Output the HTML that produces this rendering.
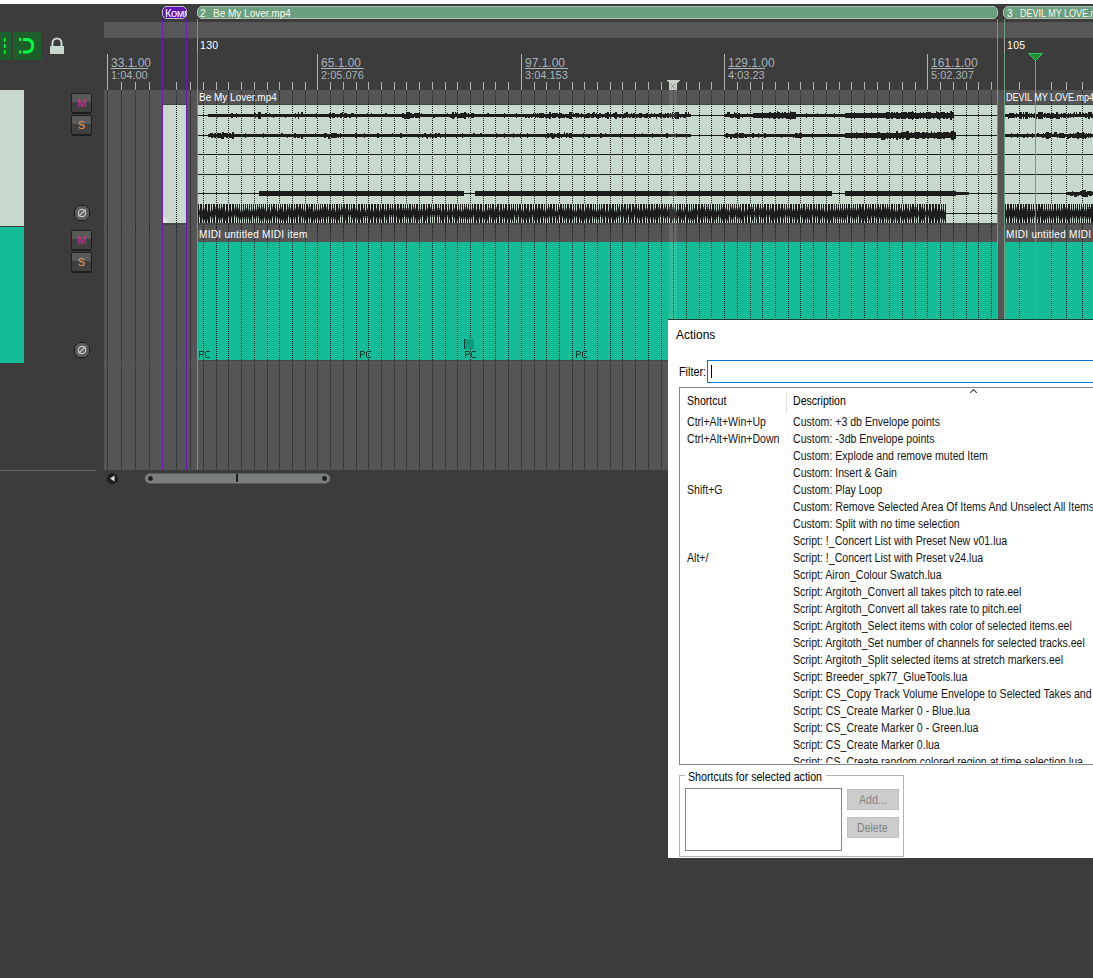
<!DOCTYPE html><html><head><meta charset="utf-8"><style>
*{margin:0;padding:0;box-sizing:border-box}
html,body{width:1093px;height:978px;overflow:hidden;background:#3c3c3c;font-family:"Liberation Sans", sans-serif}
.a{position:absolute}
.t{position:absolute;white-space:nowrap;line-height:1}
</style></head><body>
<div class="a" style="left:0;top:0;width:1093px;height:4px;background:#fff"></div>
<svg class="a" style="left:0;top:0" width="1093" height="978" viewBox="0 0 1093 978" shape-rendering="crispEdges"><rect x="104" y="22" width="989" height="16" fill="#575757"/><rect x="104" y="90" width="989" height="380" fill="#555555"/><rect x="0" y="90" width="24" height="136" fill="#c8d8cc"/><rect x="0" y="227" width="24" height="136" fill="#14bb97"/><rect x="0" y="470" width="96" height="1" fill="#6a6a6a"/><rect x="163" y="104" width="23" height="1" fill="#454545" /><rect x="163" y="105" width="23" height="118" fill="#c8d8cc" /><rect x="163" y="223" width="23" height="2" fill="#474747" /><polygon points="163,216 163,223 170,223" fill="#dde8e0" shape-rendering="auto"/><rect x="198" y="104" width="799" height="1" fill="#454545" /><rect x="198" y="105" width="799" height="118" fill="#c8d8cc" /><rect x="198" y="223" width="799" height="2" fill="#474747" /><rect x="1005" y="104" width="88" height="1" fill="#454545" /><rect x="1005" y="105" width="88" height="118" fill="#c8d8cc" /><rect x="1005" y="223" width="88" height="2" fill="#474747" /><rect x="198" y="242" width="799" height="118" fill="#14bb97" /><rect x="198" y="360" width="799" height="1" fill="#454545" /><rect x="1005" y="242" width="88" height="118" fill="#14bb97" /><rect x="1005" y="360" width="88" height="1" fill="#454545" /><defs><pattern id="dp" x="0" y="0" width="1" height="2" patternUnits="userSpaceOnUse"><rect x="0" y="0" width="1" height="1" fill="#1c1c1c"/></pattern></defs><defs><pattern id="dp2" x="0" y="1" width="1" height="2" patternUnits="userSpaceOnUse"><rect x="0" y="0" width="1" height="1" fill="#1c1c1c"/></pattern></defs><rect x="107" y="90" width="1" height="137" fill="url(#dp)"/><rect x="107" y="227" width="1" height="136" fill="url(#dp2)"/><rect x="107" y="363" width="1" height="107" fill="url(#dp)"/><rect x="121" y="90" width="1" height="137" fill="url(#dp)"/><rect x="121" y="227" width="1" height="136" fill="url(#dp2)"/><rect x="121" y="363" width="1" height="107" fill="url(#dp)"/><rect x="135" y="90" width="1" height="137" fill="url(#dp)"/><rect x="135" y="227" width="1" height="136" fill="url(#dp2)"/><rect x="135" y="363" width="1" height="107" fill="url(#dp)"/><rect x="149" y="90" width="1" height="137" fill="url(#dp)"/><rect x="149" y="227" width="1" height="136" fill="url(#dp2)"/><rect x="149" y="363" width="1" height="107" fill="url(#dp)"/><rect x="176" y="90" width="1" height="137" fill="url(#dp)"/><rect x="176" y="227" width="1" height="136" fill="url(#dp2)"/><rect x="176" y="363" width="1" height="107" fill="url(#dp)"/><rect x="190" y="90" width="1" height="137" fill="url(#dp)"/><rect x="190" y="227" width="1" height="136" fill="url(#dp2)"/><rect x="190" y="363" width="1" height="107" fill="url(#dp)"/><rect x="203" y="90" width="1" height="137" fill="url(#dp)"/><rect x="203" y="227" width="1" height="136" fill="url(#dp2)"/><rect x="203" y="363" width="1" height="107" fill="url(#dp)"/><rect x="216" y="90" width="1" height="137" fill="url(#dp)"/><rect x="216" y="227" width="1" height="136" fill="url(#dp2)"/><rect x="216" y="363" width="1" height="107" fill="url(#dp)"/><rect x="228" y="90" width="1" height="137" fill="url(#dp)"/><rect x="228" y="227" width="1" height="136" fill="url(#dp2)"/><rect x="228" y="363" width="1" height="107" fill="url(#dp)"/><rect x="241" y="90" width="1" height="137" fill="url(#dp)"/><rect x="241" y="227" width="1" height="136" fill="url(#dp2)"/><rect x="241" y="363" width="1" height="107" fill="url(#dp)"/><rect x="254" y="90" width="1" height="137" fill="url(#dp)"/><rect x="254" y="227" width="1" height="136" fill="url(#dp2)"/><rect x="254" y="363" width="1" height="107" fill="url(#dp)"/><rect x="267" y="90" width="1" height="137" fill="url(#dp)"/><rect x="267" y="227" width="1" height="136" fill="url(#dp2)"/><rect x="267" y="363" width="1" height="107" fill="url(#dp)"/><rect x="279" y="90" width="1" height="137" fill="url(#dp)"/><rect x="279" y="227" width="1" height="136" fill="url(#dp2)"/><rect x="279" y="363" width="1" height="107" fill="url(#dp)"/><rect x="292" y="90" width="1" height="137" fill="url(#dp)"/><rect x="292" y="227" width="1" height="136" fill="url(#dp2)"/><rect x="292" y="363" width="1" height="107" fill="url(#dp)"/><rect x="305" y="90" width="1" height="137" fill="url(#dp)"/><rect x="305" y="227" width="1" height="136" fill="url(#dp2)"/><rect x="305" y="363" width="1" height="107" fill="url(#dp)"/><rect x="317" y="90" width="1" height="137" fill="url(#dp)"/><rect x="317" y="227" width="1" height="136" fill="url(#dp2)"/><rect x="317" y="363" width="1" height="107" fill="url(#dp)"/><rect x="330" y="90" width="1" height="137" fill="url(#dp)"/><rect x="330" y="227" width="1" height="136" fill="url(#dp2)"/><rect x="330" y="363" width="1" height="107" fill="url(#dp)"/><rect x="343" y="90" width="1" height="137" fill="url(#dp)"/><rect x="343" y="227" width="1" height="136" fill="url(#dp2)"/><rect x="343" y="363" width="1" height="107" fill="url(#dp)"/><rect x="356" y="90" width="1" height="137" fill="url(#dp)"/><rect x="356" y="227" width="1" height="136" fill="url(#dp2)"/><rect x="356" y="363" width="1" height="107" fill="url(#dp)"/><rect x="368" y="90" width="1" height="137" fill="url(#dp)"/><rect x="368" y="227" width="1" height="136" fill="url(#dp2)"/><rect x="368" y="363" width="1" height="107" fill="url(#dp)"/><rect x="381" y="90" width="1" height="137" fill="url(#dp)"/><rect x="381" y="227" width="1" height="136" fill="url(#dp2)"/><rect x="381" y="363" width="1" height="107" fill="url(#dp)"/><rect x="394" y="90" width="1" height="137" fill="url(#dp)"/><rect x="394" y="227" width="1" height="136" fill="url(#dp2)"/><rect x="394" y="363" width="1" height="107" fill="url(#dp)"/><rect x="406" y="90" width="1" height="137" fill="url(#dp)"/><rect x="406" y="227" width="1" height="136" fill="url(#dp2)"/><rect x="406" y="363" width="1" height="107" fill="url(#dp)"/><rect x="419" y="90" width="1" height="137" fill="url(#dp)"/><rect x="419" y="227" width="1" height="136" fill="url(#dp2)"/><rect x="419" y="363" width="1" height="107" fill="url(#dp)"/><rect x="432" y="90" width="1" height="137" fill="url(#dp)"/><rect x="432" y="227" width="1" height="136" fill="url(#dp2)"/><rect x="432" y="363" width="1" height="107" fill="url(#dp)"/><rect x="445" y="90" width="1" height="137" fill="url(#dp)"/><rect x="445" y="227" width="1" height="136" fill="url(#dp2)"/><rect x="445" y="363" width="1" height="107" fill="url(#dp)"/><rect x="457" y="90" width="1" height="137" fill="url(#dp)"/><rect x="457" y="227" width="1" height="136" fill="url(#dp2)"/><rect x="457" y="363" width="1" height="107" fill="url(#dp)"/><rect x="470" y="90" width="1" height="137" fill="url(#dp)"/><rect x="470" y="227" width="1" height="136" fill="url(#dp2)"/><rect x="470" y="363" width="1" height="107" fill="url(#dp)"/><rect x="483" y="90" width="1" height="137" fill="url(#dp)"/><rect x="483" y="227" width="1" height="136" fill="url(#dp2)"/><rect x="483" y="363" width="1" height="107" fill="url(#dp)"/><rect x="495" y="90" width="1" height="137" fill="url(#dp)"/><rect x="495" y="227" width="1" height="136" fill="url(#dp2)"/><rect x="495" y="363" width="1" height="107" fill="url(#dp)"/><rect x="508" y="90" width="1" height="137" fill="url(#dp)"/><rect x="508" y="227" width="1" height="136" fill="url(#dp2)"/><rect x="508" y="363" width="1" height="107" fill="url(#dp)"/><rect x="521" y="90" width="1" height="137" fill="url(#dp)"/><rect x="521" y="227" width="1" height="136" fill="url(#dp2)"/><rect x="521" y="363" width="1" height="107" fill="url(#dp)"/><rect x="534" y="90" width="1" height="137" fill="url(#dp)"/><rect x="534" y="227" width="1" height="136" fill="url(#dp2)"/><rect x="534" y="363" width="1" height="107" fill="url(#dp)"/><rect x="546" y="90" width="1" height="137" fill="url(#dp)"/><rect x="546" y="227" width="1" height="136" fill="url(#dp2)"/><rect x="546" y="363" width="1" height="107" fill="url(#dp)"/><rect x="559" y="90" width="1" height="137" fill="url(#dp)"/><rect x="559" y="227" width="1" height="136" fill="url(#dp2)"/><rect x="559" y="363" width="1" height="107" fill="url(#dp)"/><rect x="572" y="90" width="1" height="137" fill="url(#dp)"/><rect x="572" y="227" width="1" height="136" fill="url(#dp2)"/><rect x="572" y="363" width="1" height="107" fill="url(#dp)"/><rect x="584" y="90" width="1" height="137" fill="url(#dp)"/><rect x="584" y="227" width="1" height="136" fill="url(#dp2)"/><rect x="584" y="363" width="1" height="107" fill="url(#dp)"/><rect x="597" y="90" width="1" height="137" fill="url(#dp)"/><rect x="597" y="227" width="1" height="136" fill="url(#dp2)"/><rect x="597" y="363" width="1" height="107" fill="url(#dp)"/><rect x="610" y="90" width="1" height="137" fill="url(#dp)"/><rect x="610" y="227" width="1" height="136" fill="url(#dp2)"/><rect x="610" y="363" width="1" height="107" fill="url(#dp)"/><rect x="622" y="90" width="1" height="137" fill="url(#dp)"/><rect x="622" y="227" width="1" height="136" fill="url(#dp2)"/><rect x="622" y="363" width="1" height="107" fill="url(#dp)"/><rect x="635" y="90" width="1" height="137" fill="url(#dp)"/><rect x="635" y="227" width="1" height="136" fill="url(#dp2)"/><rect x="635" y="363" width="1" height="107" fill="url(#dp)"/><rect x="648" y="90" width="1" height="137" fill="url(#dp)"/><rect x="648" y="227" width="1" height="136" fill="url(#dp2)"/><rect x="648" y="363" width="1" height="107" fill="url(#dp)"/><rect x="661" y="90" width="1" height="137" fill="url(#dp)"/><rect x="661" y="227" width="1" height="136" fill="url(#dp2)"/><rect x="661" y="363" width="1" height="107" fill="url(#dp)"/><rect x="673" y="90" width="1" height="137" fill="url(#dp)"/><rect x="673" y="227" width="1" height="136" fill="url(#dp2)"/><rect x="673" y="363" width="1" height="107" fill="url(#dp)"/><rect x="686" y="90" width="1" height="137" fill="url(#dp)"/><rect x="686" y="227" width="1" height="136" fill="url(#dp2)"/><rect x="686" y="363" width="1" height="107" fill="url(#dp)"/><rect x="699" y="90" width="1" height="137" fill="url(#dp)"/><rect x="699" y="227" width="1" height="136" fill="url(#dp2)"/><rect x="699" y="363" width="1" height="107" fill="url(#dp)"/><rect x="711" y="90" width="1" height="137" fill="url(#dp)"/><rect x="711" y="227" width="1" height="136" fill="url(#dp2)"/><rect x="711" y="363" width="1" height="107" fill="url(#dp)"/><rect x="724" y="90" width="1" height="137" fill="url(#dp)"/><rect x="724" y="227" width="1" height="136" fill="url(#dp2)"/><rect x="724" y="363" width="1" height="107" fill="url(#dp)"/><rect x="737" y="90" width="1" height="137" fill="url(#dp)"/><rect x="737" y="227" width="1" height="136" fill="url(#dp2)"/><rect x="737" y="363" width="1" height="107" fill="url(#dp)"/><rect x="750" y="90" width="1" height="137" fill="url(#dp)"/><rect x="750" y="227" width="1" height="136" fill="url(#dp2)"/><rect x="750" y="363" width="1" height="107" fill="url(#dp)"/><rect x="762" y="90" width="1" height="137" fill="url(#dp)"/><rect x="762" y="227" width="1" height="136" fill="url(#dp2)"/><rect x="762" y="363" width="1" height="107" fill="url(#dp)"/><rect x="775" y="90" width="1" height="137" fill="url(#dp)"/><rect x="775" y="227" width="1" height="136" fill="url(#dp2)"/><rect x="775" y="363" width="1" height="107" fill="url(#dp)"/><rect x="788" y="90" width="1" height="137" fill="url(#dp)"/><rect x="788" y="227" width="1" height="136" fill="url(#dp2)"/><rect x="788" y="363" width="1" height="107" fill="url(#dp)"/><rect x="800" y="90" width="1" height="137" fill="url(#dp)"/><rect x="800" y="227" width="1" height="136" fill="url(#dp2)"/><rect x="800" y="363" width="1" height="107" fill="url(#dp)"/><rect x="813" y="90" width="1" height="137" fill="url(#dp)"/><rect x="813" y="227" width="1" height="136" fill="url(#dp2)"/><rect x="813" y="363" width="1" height="107" fill="url(#dp)"/><rect x="826" y="90" width="1" height="137" fill="url(#dp)"/><rect x="826" y="227" width="1" height="136" fill="url(#dp2)"/><rect x="826" y="363" width="1" height="107" fill="url(#dp)"/><rect x="839" y="90" width="1" height="137" fill="url(#dp)"/><rect x="839" y="227" width="1" height="136" fill="url(#dp2)"/><rect x="839" y="363" width="1" height="107" fill="url(#dp)"/><rect x="851" y="90" width="1" height="137" fill="url(#dp)"/><rect x="851" y="227" width="1" height="136" fill="url(#dp2)"/><rect x="851" y="363" width="1" height="107" fill="url(#dp)"/><rect x="864" y="90" width="1" height="137" fill="url(#dp)"/><rect x="864" y="227" width="1" height="136" fill="url(#dp2)"/><rect x="864" y="363" width="1" height="107" fill="url(#dp)"/><rect x="877" y="90" width="1" height="137" fill="url(#dp)"/><rect x="877" y="227" width="1" height="136" fill="url(#dp2)"/><rect x="877" y="363" width="1" height="107" fill="url(#dp)"/><rect x="889" y="90" width="1" height="137" fill="url(#dp)"/><rect x="889" y="227" width="1" height="136" fill="url(#dp2)"/><rect x="889" y="363" width="1" height="107" fill="url(#dp)"/><rect x="902" y="90" width="1" height="137" fill="url(#dp)"/><rect x="902" y="227" width="1" height="136" fill="url(#dp2)"/><rect x="902" y="363" width="1" height="107" fill="url(#dp)"/><rect x="915" y="90" width="1" height="137" fill="url(#dp)"/><rect x="915" y="227" width="1" height="136" fill="url(#dp2)"/><rect x="915" y="363" width="1" height="107" fill="url(#dp)"/><rect x="927" y="90" width="1" height="137" fill="url(#dp)"/><rect x="927" y="227" width="1" height="136" fill="url(#dp2)"/><rect x="927" y="363" width="1" height="107" fill="url(#dp)"/><rect x="940" y="90" width="1" height="137" fill="url(#dp)"/><rect x="940" y="227" width="1" height="136" fill="url(#dp2)"/><rect x="940" y="363" width="1" height="107" fill="url(#dp)"/><rect x="953" y="90" width="1" height="137" fill="url(#dp)"/><rect x="953" y="227" width="1" height="136" fill="url(#dp2)"/><rect x="953" y="363" width="1" height="107" fill="url(#dp)"/><rect x="966" y="90" width="1" height="137" fill="url(#dp)"/><rect x="966" y="227" width="1" height="136" fill="url(#dp2)"/><rect x="966" y="363" width="1" height="107" fill="url(#dp)"/><rect x="978" y="90" width="1" height="137" fill="url(#dp)"/><rect x="978" y="227" width="1" height="136" fill="url(#dp2)"/><rect x="978" y="363" width="1" height="107" fill="url(#dp)"/><rect x="991" y="90" width="1" height="137" fill="url(#dp)"/><rect x="991" y="227" width="1" height="136" fill="url(#dp2)"/><rect x="991" y="363" width="1" height="107" fill="url(#dp)"/><rect x="1019" y="90" width="1" height="137" fill="url(#dp)"/><rect x="1019" y="227" width="1" height="136" fill="url(#dp2)"/><rect x="1019" y="363" width="1" height="107" fill="url(#dp)"/><rect x="1035" y="90" width="1" height="137" fill="url(#dp)"/><rect x="1035" y="227" width="1" height="136" fill="url(#dp2)"/><rect x="1035" y="363" width="1" height="107" fill="url(#dp)"/><rect x="1051" y="90" width="1" height="137" fill="url(#dp)"/><rect x="1051" y="227" width="1" height="136" fill="url(#dp2)"/><rect x="1051" y="363" width="1" height="107" fill="url(#dp)"/><rect x="1066" y="90" width="1" height="137" fill="url(#dp)"/><rect x="1066" y="227" width="1" height="136" fill="url(#dp2)"/><rect x="1066" y="363" width="1" height="107" fill="url(#dp)"/><rect x="1082" y="90" width="1" height="137" fill="url(#dp)"/><rect x="1082" y="227" width="1" height="136" fill="url(#dp2)"/><rect x="1082" y="363" width="1" height="107" fill="url(#dp)"/><rect x="198" y="115" width="799" height="1" fill="#1c1c1c" /><rect x="208" y="114" width="483" height="3" fill="#1c1c1c" /><rect x="217" y="117" width="1" height="1" fill="#1c1c1c" /><rect x="231" y="113" width="2" height="5" fill="#1c1c1c" /><rect x="236" y="113" width="1" height="5" fill="#1c1c1c" /><rect x="254" y="113" width="1" height="1" fill="#1c1c1c" /><rect x="255" y="113" width="1" height="5" fill="#1c1c1c" /><rect x="258" y="112" width="3" height="7" fill="#1c1c1c" /><rect x="265" y="113" width="2" height="1" fill="#1c1c1c" /><rect x="269" y="113" width="1" height="1" fill="#1c1c1c" /><rect x="273" y="117" width="1" height="1" fill="#1c1c1c" /><rect x="285" y="117" width="1" height="1" fill="#1c1c1c" /><rect x="295" y="113" width="1" height="5" fill="#1c1c1c" /><rect x="298" y="112" width="1" height="7" fill="#1c1c1c" /><rect x="301" y="112" width="2" height="2" fill="#1c1c1c" /><rect x="316" y="113" width="1" height="5" fill="#1c1c1c" /><rect x="329" y="113" width="2" height="5" fill="#1c1c1c" /><rect x="332" y="113" width="2" height="5" fill="#1c1c1c" /><rect x="334" y="113" width="1" height="5" fill="#1c1c1c" /><rect x="337" y="117" width="1" height="1" fill="#1c1c1c" /><rect x="340" y="113" width="2" height="5" fill="#1c1c1c" /><rect x="342" y="112" width="1" height="2" fill="#1c1c1c" /><rect x="344" y="113" width="2" height="5" fill="#1c1c1c" /><rect x="346" y="113" width="1" height="5" fill="#1c1c1c" /><rect x="349" y="117" width="2" height="1" fill="#1c1c1c" /><rect x="351" y="113" width="3" height="1" fill="#1c1c1c" /><rect x="356" y="117" width="1" height="1" fill="#1c1c1c" /><rect x="367" y="113" width="1" height="1" fill="#1c1c1c" /><rect x="371" y="113" width="1" height="1" fill="#1c1c1c" /><rect x="385" y="113" width="2" height="1" fill="#1c1c1c" /><rect x="402" y="113" width="2" height="5" fill="#1c1c1c" /><rect x="404" y="117" width="2" height="2" fill="#1c1c1c" /><rect x="406" y="112" width="3" height="7" fill="#1c1c1c" /><rect x="407" y="112" width="2" height="7" fill="#1c1c1c" /><rect x="408" y="112" width="2" height="7" fill="#1c1c1c" /><rect x="410" y="113" width="2" height="5" fill="#1c1c1c" /><rect x="412" y="117" width="2" height="1" fill="#1c1c1c" /><rect x="414" y="113" width="2" height="1" fill="#1c1c1c" /><rect x="415" y="113" width="1" height="5" fill="#1c1c1c" /><rect x="416" y="113" width="3" height="5" fill="#1c1c1c" /><rect x="418" y="113" width="2" height="5" fill="#1c1c1c" /><rect x="421" y="113" width="1" height="1" fill="#1c1c1c" /><rect x="433" y="117" width="2" height="1" fill="#1c1c1c" /><rect x="447" y="113" width="1" height="1" fill="#1c1c1c" /><rect x="450" y="117" width="2" height="1" fill="#1c1c1c" /><rect x="452" y="112" width="2" height="7" fill="#1c1c1c" /><rect x="453" y="117" width="2" height="1" fill="#1c1c1c" /><rect x="455" y="112" width="1" height="2" fill="#1c1c1c" /><rect x="456" y="113" width="2" height="1" fill="#1c1c1c" /><rect x="457" y="117" width="3" height="1" fill="#1c1c1c" /><rect x="460" y="113" width="2" height="5" fill="#1c1c1c" /><rect x="462" y="113" width="2" height="5" fill="#1c1c1c" /><rect x="464" y="112" width="2" height="7" fill="#1c1c1c" /><rect x="465" y="113" width="2" height="1" fill="#1c1c1c" /><rect x="468" y="113" width="1" height="5" fill="#1c1c1c" /><rect x="471" y="113" width="3" height="5" fill="#1c1c1c" /><rect x="487" y="113" width="2" height="1" fill="#1c1c1c" /><rect x="504" y="113" width="1" height="5" fill="#1c1c1c" /><rect x="516" y="113" width="1" height="5" fill="#1c1c1c" /><rect x="525" y="117" width="2" height="1" fill="#1c1c1c" /><rect x="528" y="117" width="2" height="1" fill="#1c1c1c" /><rect x="531" y="117" width="1" height="1" fill="#1c1c1c" /><rect x="533" y="113" width="1" height="1" fill="#1c1c1c" /><rect x="535" y="113" width="1" height="5" fill="#1c1c1c" /><rect x="537" y="113" width="1" height="5" fill="#1c1c1c" /><rect x="539" y="113" width="2" height="5" fill="#1c1c1c" /><rect x="541" y="113" width="1" height="5" fill="#1c1c1c" /><rect x="542" y="113" width="2" height="5" fill="#1c1c1c" /><rect x="545" y="117" width="2" height="1" fill="#1c1c1c" /><rect x="547" y="117" width="1" height="1" fill="#1c1c1c" /><rect x="548" y="117" width="1" height="1" fill="#1c1c1c" /><rect x="549" y="112" width="2" height="7" fill="#1c1c1c" /><rect x="552" y="113" width="2" height="5" fill="#1c1c1c" /><rect x="553" y="113" width="1" height="1" fill="#1c1c1c" /><rect x="554" y="113" width="2" height="5" fill="#1c1c1c" /><rect x="555" y="113" width="3" height="1" fill="#1c1c1c" /><rect x="558" y="117" width="1" height="1" fill="#1c1c1c" /><rect x="559" y="113" width="1" height="5" fill="#1c1c1c" /><rect x="560" y="113" width="1" height="5" fill="#1c1c1c" /><rect x="561" y="113" width="1" height="5" fill="#1c1c1c" /><rect x="562" y="117" width="2" height="1" fill="#1c1c1c" /><rect x="564" y="117" width="1" height="1" fill="#1c1c1c" /><rect x="566" y="117" width="3" height="1" fill="#1c1c1c" /><rect x="569" y="112" width="3" height="7" fill="#1c1c1c" /><rect x="570" y="113" width="1" height="1" fill="#1c1c1c" /><rect x="571" y="113" width="1" height="1" fill="#1c1c1c" /><rect x="573" y="113" width="1" height="1" fill="#1c1c1c" /><rect x="575" y="113" width="3" height="1" fill="#1c1c1c" /><rect x="576" y="117" width="1" height="1" fill="#1c1c1c" /><rect x="578" y="113" width="1" height="5" fill="#1c1c1c" /><rect x="581" y="113" width="1" height="5" fill="#1c1c1c" /><rect x="584" y="117" width="3" height="1" fill="#1c1c1c" /><rect x="587" y="113" width="3" height="5" fill="#1c1c1c" /><rect x="589" y="113" width="1" height="1" fill="#1c1c1c" /><rect x="591" y="117" width="1" height="1" fill="#1c1c1c" /><rect x="592" y="113" width="2" height="5" fill="#1c1c1c" /><rect x="593" y="112" width="2" height="2" fill="#1c1c1c" /><rect x="596" y="113" width="1" height="5" fill="#1c1c1c" /><rect x="597" y="117" width="2" height="2" fill="#1c1c1c" /><rect x="598" y="117" width="1" height="1" fill="#1c1c1c" /><rect x="599" y="113" width="2" height="5" fill="#1c1c1c" /><rect x="602" y="117" width="1" height="1" fill="#1c1c1c" /><rect x="605" y="113" width="2" height="5" fill="#1c1c1c" /><rect x="607" y="112" width="2" height="7" fill="#1c1c1c" /><rect x="610" y="113" width="1" height="5" fill="#1c1c1c" /><rect x="613" y="113" width="3" height="1" fill="#1c1c1c" /><rect x="614" y="117" width="1" height="1" fill="#1c1c1c" /><rect x="615" y="112" width="2" height="7" fill="#1c1c1c" /><rect x="616" y="113" width="1" height="5" fill="#1c1c1c" /><rect x="619" y="117" width="2" height="1" fill="#1c1c1c" /><rect x="622" y="117" width="3" height="1" fill="#1c1c1c" /><rect x="624" y="113" width="1" height="5" fill="#1c1c1c" /><rect x="625" y="113" width="1" height="5" fill="#1c1c1c" /><rect x="626" y="112" width="2" height="2" fill="#1c1c1c" /><rect x="627" y="113" width="1" height="5" fill="#1c1c1c" /><rect x="629" y="117" width="2" height="1" fill="#1c1c1c" /><rect x="631" y="113" width="1" height="1" fill="#1c1c1c" /><rect x="632" y="117" width="1" height="1" fill="#1c1c1c" /><rect x="633" y="113" width="2" height="5" fill="#1c1c1c" /><rect x="636" y="117" width="2" height="1" fill="#1c1c1c" /><rect x="639" y="113" width="2" height="5" fill="#1c1c1c" /><rect x="641" y="113" width="1" height="5" fill="#1c1c1c" /><rect x="644" y="117" width="3" height="1" fill="#1c1c1c" /><rect x="646" y="113" width="2" height="5" fill="#1c1c1c" /><rect x="649" y="117" width="2" height="1" fill="#1c1c1c" /><rect x="651" y="113" width="1" height="1" fill="#1c1c1c" /><rect x="654" y="113" width="1" height="1" fill="#1c1c1c" /><rect x="656" y="117" width="1" height="2" fill="#1c1c1c" /><rect x="659" y="113" width="2" height="1" fill="#1c1c1c" /><rect x="660" y="113" width="2" height="5" fill="#1c1c1c" /><rect x="663" y="117" width="3" height="1" fill="#1c1c1c" /><rect x="665" y="113" width="1" height="5" fill="#1c1c1c" /><rect x="667" y="113" width="2" height="5" fill="#1c1c1c" /><rect x="670" y="113" width="1" height="5" fill="#1c1c1c" /><rect x="672" y="112" width="1" height="7" fill="#1c1c1c" /><rect x="674" y="113" width="2" height="5" fill="#1c1c1c" /><rect x="675" y="112" width="1" height="7" fill="#1c1c1c" /><rect x="676" y="112" width="3" height="7" fill="#1c1c1c" /><rect x="677" y="112" width="1" height="7" fill="#1c1c1c" /><rect x="680" y="117" width="1" height="1" fill="#1c1c1c" /><rect x="683" y="117" width="3" height="1" fill="#1c1c1c" /><rect x="685" y="112" width="2" height="2" fill="#1c1c1c" /><rect x="688" y="112" width="1" height="2" fill="#1c1c1c" /><rect x="724" y="114" width="29" height="3" fill="#1c1c1c" /><rect x="727" y="112" width="3" height="2" fill="#1c1c1c" /><rect x="730" y="117" width="3" height="1" fill="#1c1c1c" /><rect x="731" y="117" width="3" height="1" fill="#1c1c1c" /><rect x="734" y="112" width="1" height="2" fill="#1c1c1c" /><rect x="735" y="113" width="2" height="5" fill="#1c1c1c" /><rect x="737" y="117" width="3" height="2" fill="#1c1c1c" /><rect x="738" y="113" width="1" height="1" fill="#1c1c1c" /><rect x="739" y="113" width="1" height="5" fill="#1c1c1c" /><rect x="742" y="117" width="1" height="1" fill="#1c1c1c" /><rect x="747" y="113" width="1" height="1" fill="#1c1c1c" /><rect x="753" y="113" width="43" height="5" fill="#1c1c1c" /><rect x="769" y="112" width="1" height="7" fill="#1c1c1c" /><rect x="770" y="112" width="1" height="1" fill="#1c1c1c" /><rect x="773" y="118" width="2" height="1" fill="#1c1c1c" /><rect x="774" y="112" width="2" height="7" fill="#1c1c1c" /><rect x="777" y="111" width="1" height="2" fill="#1c1c1c" /><rect x="778" y="112" width="2" height="7" fill="#1c1c1c" /><rect x="779" y="112" width="1" height="7" fill="#1c1c1c" /><rect x="782" y="112" width="1" height="7" fill="#1c1c1c" /><rect x="784" y="112" width="2" height="1" fill="#1c1c1c" /><rect x="786" y="118" width="3" height="1" fill="#1c1c1c" /><rect x="787" y="118" width="1" height="1" fill="#1c1c1c" /><rect x="788" y="118" width="2" height="1" fill="#1c1c1c" /><rect x="790" y="111" width="1" height="9" fill="#1c1c1c" /><rect x="791" y="112" width="3" height="7" fill="#1c1c1c" /><rect x="793" y="112" width="3" height="7" fill="#1c1c1c" /><rect x="794" y="112" width="1" height="1" fill="#1c1c1c" /><rect x="796" y="114" width="49" height="3" fill="#1c1c1c" /><rect x="806" y="113" width="1" height="5" fill="#1c1c1c" /><rect x="817" y="113" width="1" height="1" fill="#1c1c1c" /><rect x="825" y="113" width="1" height="1" fill="#1c1c1c" /><rect x="834" y="113" width="1" height="5" fill="#1c1c1c" /><rect x="845" y="113" width="109" height="5" fill="#1c1c1c" /><rect x="854" y="112" width="1" height="7" fill="#1c1c1c" /><rect x="871" y="112" width="1" height="7" fill="#1c1c1c" /><rect x="886" y="112" width="2" height="7" fill="#1c1c1c" /><rect x="888" y="112" width="1" height="7" fill="#1c1c1c" /><rect x="891" y="112" width="2" height="7" fill="#1c1c1c" /><rect x="892" y="112" width="1" height="7" fill="#1c1c1c" /><rect x="894" y="112" width="1" height="1" fill="#1c1c1c" /><rect x="896" y="112" width="2" height="7" fill="#1c1c1c" /><rect x="898" y="118" width="2" height="1" fill="#1c1c1c" /><rect x="901" y="112" width="3" height="7" fill="#1c1c1c" /><rect x="904" y="112" width="2" height="7" fill="#1c1c1c" /><rect x="905" y="112" width="2" height="1" fill="#1c1c1c" /><rect x="908" y="112" width="2" height="7" fill="#1c1c1c" /><rect x="910" y="112" width="2" height="7" fill="#1c1c1c" /><rect x="911" y="112" width="3" height="7" fill="#1c1c1c" /><rect x="912" y="111" width="1" height="9" fill="#1c1c1c" /><rect x="915" y="118" width="2" height="1" fill="#1c1c1c" /><rect x="917" y="118" width="2" height="1" fill="#1c1c1c" /><rect x="920" y="112" width="1" height="7" fill="#1c1c1c" /><rect x="923" y="112" width="1" height="7" fill="#1c1c1c" /><rect x="926" y="112" width="1" height="7" fill="#1c1c1c" /><rect x="928" y="112" width="3" height="7" fill="#1c1c1c" /><rect x="930" y="112" width="1" height="7" fill="#1c1c1c" /><rect x="933" y="118" width="1" height="1" fill="#1c1c1c" /><rect x="936" y="111" width="1" height="2" fill="#1c1c1c" /><rect x="937" y="112" width="2" height="7" fill="#1c1c1c" /><rect x="939" y="118" width="1" height="2" fill="#1c1c1c" /><rect x="941" y="112" width="2" height="1" fill="#1c1c1c" /><rect x="943" y="112" width="2" height="7" fill="#1c1c1c" /><rect x="946" y="118" width="2" height="1" fill="#1c1c1c" /><rect x="947" y="112" width="1" height="7" fill="#1c1c1c" /><rect x="950" y="111" width="2" height="9" fill="#1c1c1c" /><rect x="951" y="112" width="1" height="7" fill="#1c1c1c" /><rect x="952" y="112" width="2" height="1" fill="#1c1c1c" /><rect x="198" y="135" width="799" height="1" fill="#1c1c1c" /><rect x="208" y="134" width="483" height="3" fill="#1c1c1c" /><rect x="210" y="133" width="2" height="1" fill="#1c1c1c" /><rect x="211" y="133" width="2" height="5" fill="#1c1c1c" /><rect x="214" y="133" width="2" height="5" fill="#1c1c1c" /><rect x="217" y="133" width="3" height="5" fill="#1c1c1c" /><rect x="219" y="133" width="2" height="5" fill="#1c1c1c" /><rect x="220" y="133" width="1" height="5" fill="#1c1c1c" /><rect x="221" y="137" width="2" height="2" fill="#1c1c1c" /><rect x="222" y="132" width="2" height="7" fill="#1c1c1c" /><rect x="223" y="133" width="2" height="1" fill="#1c1c1c" /><rect x="224" y="133" width="2" height="1" fill="#1c1c1c" /><rect x="226" y="133" width="2" height="5" fill="#1c1c1c" /><rect x="229" y="133" width="2" height="5" fill="#1c1c1c" /><rect x="231" y="137" width="1" height="1" fill="#1c1c1c" /><rect x="232" y="132" width="2" height="7" fill="#1c1c1c" /><rect x="245" y="133" width="1" height="5" fill="#1c1c1c" /><rect x="263" y="133" width="1" height="5" fill="#1c1c1c" /><rect x="281" y="133" width="2" height="1" fill="#1c1c1c" /><rect x="287" y="137" width="1" height="1" fill="#1c1c1c" /><rect x="294" y="133" width="2" height="5" fill="#1c1c1c" /><rect x="295" y="133" width="1" height="5" fill="#1c1c1c" /><rect x="297" y="137" width="2" height="1" fill="#1c1c1c" /><rect x="298" y="137" width="2" height="1" fill="#1c1c1c" /><rect x="301" y="137" width="2" height="2" fill="#1c1c1c" /><rect x="315" y="133" width="1" height="1" fill="#1c1c1c" /><rect x="324" y="133" width="1" height="5" fill="#1c1c1c" /><rect x="325" y="133" width="1" height="5" fill="#1c1c1c" /><rect x="326" y="133" width="1" height="1" fill="#1c1c1c" /><rect x="328" y="137" width="2" height="2" fill="#1c1c1c" /><rect x="331" y="133" width="2" height="5" fill="#1c1c1c" /><rect x="333" y="133" width="2" height="5" fill="#1c1c1c" /><rect x="335" y="133" width="2" height="5" fill="#1c1c1c" /><rect x="338" y="137" width="1" height="1" fill="#1c1c1c" /><rect x="340" y="133" width="1" height="5" fill="#1c1c1c" /><rect x="355" y="133" width="2" height="5" fill="#1c1c1c" /><rect x="364" y="133" width="1" height="5" fill="#1c1c1c" /><rect x="377" y="133" width="2" height="5" fill="#1c1c1c" /><rect x="392" y="133" width="1" height="1" fill="#1c1c1c" /><rect x="400" y="133" width="2" height="5" fill="#1c1c1c" /><rect x="418" y="137" width="1" height="1" fill="#1c1c1c" /><rect x="422" y="137" width="1" height="1" fill="#1c1c1c" /><rect x="424" y="133" width="2" height="1" fill="#1c1c1c" /><rect x="426" y="137" width="2" height="1" fill="#1c1c1c" /><rect x="427" y="137" width="1" height="2" fill="#1c1c1c" /><rect x="430" y="133" width="1" height="5" fill="#1c1c1c" /><rect x="432" y="137" width="2" height="1" fill="#1c1c1c" /><rect x="435" y="133" width="1" height="5" fill="#1c1c1c" /><rect x="436" y="133" width="1" height="5" fill="#1c1c1c" /><rect x="438" y="133" width="2" height="1" fill="#1c1c1c" /><rect x="440" y="137" width="1" height="1" fill="#1c1c1c" /><rect x="445" y="133" width="1" height="5" fill="#1c1c1c" /><rect x="456" y="137" width="1" height="1" fill="#1c1c1c" /><rect x="462" y="133" width="1" height="5" fill="#1c1c1c" /><rect x="473" y="133" width="2" height="1" fill="#1c1c1c" /><rect x="480" y="133" width="2" height="1" fill="#1c1c1c" /><rect x="496" y="133" width="1" height="5" fill="#1c1c1c" /><rect x="504" y="133" width="1" height="5" fill="#1c1c1c" /><rect x="513" y="133" width="1" height="5" fill="#1c1c1c" /><rect x="520" y="133" width="1" height="5" fill="#1c1c1c" /><rect x="527" y="133" width="1" height="5" fill="#1c1c1c" /><rect x="545" y="137" width="1" height="1" fill="#1c1c1c" /><rect x="547" y="133" width="2" height="5" fill="#1c1c1c" /><rect x="550" y="133" width="1" height="1" fill="#1c1c1c" /><rect x="551" y="133" width="2" height="5" fill="#1c1c1c" /><rect x="552" y="137" width="2" height="2" fill="#1c1c1c" /><rect x="554" y="133" width="1" height="5" fill="#1c1c1c" /><rect x="557" y="133" width="1" height="5" fill="#1c1c1c" /><rect x="558" y="133" width="2" height="5" fill="#1c1c1c" /><rect x="561" y="137" width="1" height="1" fill="#1c1c1c" /><rect x="564" y="132" width="1" height="2" fill="#1c1c1c" /><rect x="566" y="133" width="1" height="5" fill="#1c1c1c" /><rect x="567" y="133" width="1" height="1" fill="#1c1c1c" /><rect x="569" y="133" width="2" height="5" fill="#1c1c1c" /><rect x="571" y="133" width="1" height="5" fill="#1c1c1c" /><rect x="583" y="133" width="1" height="5" fill="#1c1c1c" /><rect x="588" y="137" width="2" height="1" fill="#1c1c1c" /><rect x="600" y="133" width="2" height="5" fill="#1c1c1c" /><rect x="605" y="133" width="1" height="1" fill="#1c1c1c" /><rect x="620" y="133" width="1" height="5" fill="#1c1c1c" /><rect x="634" y="133" width="1" height="5" fill="#1c1c1c" /><rect x="642" y="133" width="1" height="1" fill="#1c1c1c" /><rect x="652" y="133" width="1" height="5" fill="#1c1c1c" /><rect x="666" y="133" width="2" height="5" fill="#1c1c1c" /><rect x="676" y="133" width="1" height="5" fill="#1c1c1c" /><rect x="686" y="137" width="1" height="1" fill="#1c1c1c" /><rect x="725" y="134" width="65" height="3" fill="#1c1c1c" /><rect x="726" y="133" width="2" height="5" fill="#1c1c1c" /><rect x="727" y="133" width="1" height="5" fill="#1c1c1c" /><rect x="730" y="137" width="2" height="2" fill="#1c1c1c" /><rect x="733" y="137" width="3" height="1" fill="#1c1c1c" /><rect x="735" y="133" width="3" height="5" fill="#1c1c1c" /><rect x="736" y="133" width="2" height="5" fill="#1c1c1c" /><rect x="737" y="133" width="1" height="5" fill="#1c1c1c" /><rect x="739" y="133" width="3" height="5" fill="#1c1c1c" /><rect x="741" y="133" width="3" height="5" fill="#1c1c1c" /><rect x="742" y="133" width="1" height="1" fill="#1c1c1c" /><rect x="745" y="137" width="2" height="1" fill="#1c1c1c" /><rect x="752" y="133" width="2" height="5" fill="#1c1c1c" /><rect x="758" y="133" width="1" height="5" fill="#1c1c1c" /><rect x="764" y="133" width="2" height="5" fill="#1c1c1c" /><rect x="781" y="137" width="1" height="1" fill="#1c1c1c" /><rect x="790" y="134" width="55" height="3" fill="#1c1c1c" /><rect x="793" y="137" width="1" height="1" fill="#1c1c1c" /><rect x="795" y="133" width="3" height="5" fill="#1c1c1c" /><rect x="798" y="137" width="2" height="1" fill="#1c1c1c" /><rect x="799" y="133" width="2" height="5" fill="#1c1c1c" /><rect x="801" y="133" width="1" height="5" fill="#1c1c1c" /><rect x="812" y="133" width="1" height="5" fill="#1c1c1c" /><rect x="828" y="133" width="1" height="1" fill="#1c1c1c" /><rect x="845" y="133" width="111" height="5" fill="#1c1c1c" /><rect x="851" y="138" width="1" height="1" fill="#1c1c1c" /><rect x="856" y="132" width="1" height="7" fill="#1c1c1c" /><rect x="866" y="132" width="1" height="7" fill="#1c1c1c" /><rect x="878" y="132" width="1" height="1" fill="#1c1c1c" /><rect x="879" y="132" width="1" height="1" fill="#1c1c1c" /><rect x="881" y="138" width="3" height="2" fill="#1c1c1c" /><rect x="884" y="138" width="1" height="2" fill="#1c1c1c" /><rect x="885" y="138" width="1" height="1" fill="#1c1c1c" /><rect x="887" y="132" width="1" height="7" fill="#1c1c1c" /><rect x="890" y="138" width="1" height="1" fill="#1c1c1c" /><rect x="893" y="138" width="1" height="1" fill="#1c1c1c" /><rect x="896" y="131" width="2" height="9" fill="#1c1c1c" /><rect x="899" y="138" width="2" height="1" fill="#1c1c1c" /><rect x="901" y="132" width="1" height="1" fill="#1c1c1c" /><rect x="902" y="132" width="2" height="7" fill="#1c1c1c" /><rect x="904" y="132" width="2" height="1" fill="#1c1c1c" /><rect x="906" y="131" width="3" height="9" fill="#1c1c1c" /><rect x="908" y="138" width="2" height="1" fill="#1c1c1c" /><rect x="911" y="132" width="1" height="1" fill="#1c1c1c" /><rect x="914" y="132" width="2" height="1" fill="#1c1c1c" /><rect x="916" y="132" width="2" height="7" fill="#1c1c1c" /><rect x="918" y="132" width="1" height="7" fill="#1c1c1c" /><rect x="919" y="132" width="1" height="1" fill="#1c1c1c" /><rect x="922" y="132" width="3" height="7" fill="#1c1c1c" /><rect x="924" y="132" width="1" height="1" fill="#1c1c1c" /><rect x="926" y="132" width="2" height="1" fill="#1c1c1c" /><rect x="928" y="138" width="1" height="1" fill="#1c1c1c" /><rect x="931" y="131" width="1" height="2" fill="#1c1c1c" /><rect x="934" y="132" width="1" height="7" fill="#1c1c1c" /><rect x="937" y="132" width="3" height="7" fill="#1c1c1c" /><rect x="938" y="132" width="3" height="7" fill="#1c1c1c" /><rect x="939" y="132" width="1" height="7" fill="#1c1c1c" /><rect x="941" y="132" width="1" height="7" fill="#1c1c1c" /><rect x="943" y="132" width="2" height="7" fill="#1c1c1c" /><rect x="944" y="132" width="3" height="1" fill="#1c1c1c" /><rect x="947" y="132" width="2" height="1" fill="#1c1c1c" /><rect x="950" y="132" width="1" height="1" fill="#1c1c1c" /><rect x="951" y="131" width="3" height="9" fill="#1c1c1c" /><rect x="952" y="132" width="1" height="7" fill="#1c1c1c" /><rect x="953" y="132" width="3" height="7" fill="#1c1c1c" /><rect x="954" y="132" width="1" height="7" fill="#1c1c1c" /><rect x="198" y="154" width="799" height="1" fill="#1c1c1c" /><rect x="198" y="174" width="799" height="1" fill="#1c1c1c" /><rect x="198" y="193" width="799" height="1" fill="#1c1c1c" /><rect x="259" y="191" width="205" height="5" fill="#1c1c1c" /><rect x="475" y="191" width="357" height="5" fill="#1c1c1c" /><rect x="845" y="191" width="111" height="5" fill="#1c1c1c" /><rect x="956" y="192" width="13" height="3" fill="#1c1c1c" /><rect x="198" y="204" width="748" height="19" fill="#1c1c1c"/><rect x="199" y="204" width="1" height="5" fill="#c8d8cc"/><rect x="199" y="209" width="1" height="2" fill="#c8d8cc" opacity="0.45"/><rect x="199" y="217" width="1" height="6" fill="#c8d8cc"/><rect x="199" y="215" width="1" height="2" fill="#c8d8cc" opacity="0.45"/><rect x="202" y="204" width="1" height="5" fill="#c8d8cc"/><rect x="202" y="209" width="1" height="2" fill="#c8d8cc" opacity="0.45"/><rect x="202" y="220" width="1" height="3" fill="#c8d8cc"/><rect x="202" y="218" width="1" height="2" fill="#c8d8cc" opacity="0.45"/><rect x="204" y="204" width="1" height="4" fill="#c8d8cc"/><rect x="204" y="208" width="1" height="2" fill="#c8d8cc" opacity="0.45"/><rect x="204" y="221" width="1" height="2" fill="#c8d8cc"/><rect x="204" y="219" width="1" height="2" fill="#c8d8cc" opacity="0.45"/><rect x="207" y="204" width="1" height="6" fill="#c8d8cc"/><rect x="207" y="210" width="1" height="2" fill="#c8d8cc" opacity="0.45"/><rect x="207" y="221" width="1" height="2" fill="#c8d8cc"/><rect x="207" y="219" width="1" height="2" fill="#c8d8cc" opacity="0.45"/><rect x="210" y="204" width="1" height="6" fill="#c8d8cc"/><rect x="210" y="210" width="1" height="2" fill="#c8d8cc" opacity="0.45"/><rect x="210" y="218" width="1" height="5" fill="#c8d8cc"/><rect x="210" y="216" width="1" height="2" fill="#c8d8cc" opacity="0.45"/><rect x="212" y="204" width="1" height="5" fill="#c8d8cc"/><rect x="212" y="209" width="1" height="2" fill="#c8d8cc" opacity="0.45"/><rect x="212" y="219" width="1" height="4" fill="#c8d8cc"/><rect x="212" y="217" width="1" height="2" fill="#c8d8cc" opacity="0.45"/><rect x="215" y="204" width="1" height="3" fill="#c8d8cc"/><rect x="215" y="207" width="1" height="2" fill="#c8d8cc" opacity="0.45"/><rect x="215" y="217" width="1" height="6" fill="#c8d8cc"/><rect x="215" y="215" width="1" height="2" fill="#c8d8cc" opacity="0.45"/><rect x="218" y="204" width="1" height="4" fill="#c8d8cc"/><rect x="218" y="208" width="1" height="2" fill="#c8d8cc" opacity="0.45"/><rect x="218" y="220" width="1" height="3" fill="#c8d8cc"/><rect x="218" y="218" width="1" height="2" fill="#c8d8cc" opacity="0.45"/><rect x="220" y="204" width="1" height="4" fill="#c8d8cc"/><rect x="220" y="208" width="1" height="2" fill="#c8d8cc" opacity="0.45"/><rect x="220" y="220" width="1" height="3" fill="#c8d8cc"/><rect x="220" y="218" width="1" height="2" fill="#c8d8cc" opacity="0.45"/><rect x="222" y="204" width="1" height="3" fill="#c8d8cc"/><rect x="222" y="207" width="1" height="2" fill="#c8d8cc" opacity="0.45"/><rect x="222" y="219" width="1" height="4" fill="#c8d8cc"/><rect x="222" y="217" width="1" height="2" fill="#c8d8cc" opacity="0.45"/><rect x="225" y="204" width="1" height="6" fill="#c8d8cc"/><rect x="225" y="210" width="1" height="2" fill="#c8d8cc" opacity="0.45"/><rect x="225" y="221" width="1" height="2" fill="#c8d8cc"/><rect x="225" y="219" width="1" height="2" fill="#c8d8cc" opacity="0.45"/><rect x="228" y="204" width="1" height="6" fill="#c8d8cc"/><rect x="228" y="210" width="1" height="2" fill="#c8d8cc" opacity="0.45"/><rect x="228" y="218" width="1" height="5" fill="#c8d8cc"/><rect x="228" y="216" width="1" height="2" fill="#c8d8cc" opacity="0.45"/><rect x="231" y="204" width="1" height="6" fill="#c8d8cc"/><rect x="231" y="210" width="1" height="2" fill="#c8d8cc" opacity="0.45"/><rect x="231" y="218" width="1" height="5" fill="#c8d8cc"/><rect x="231" y="216" width="1" height="2" fill="#c8d8cc" opacity="0.45"/><rect x="234" y="204" width="1" height="4" fill="#c8d8cc"/><rect x="234" y="208" width="1" height="2" fill="#c8d8cc" opacity="0.45"/><rect x="234" y="217" width="1" height="6" fill="#c8d8cc"/><rect x="234" y="215" width="1" height="2" fill="#c8d8cc" opacity="0.45"/><rect x="236" y="204" width="1" height="3" fill="#c8d8cc"/><rect x="236" y="207" width="1" height="2" fill="#c8d8cc" opacity="0.45"/><rect x="236" y="218" width="1" height="5" fill="#c8d8cc"/><rect x="236" y="216" width="1" height="2" fill="#c8d8cc" opacity="0.45"/><rect x="238" y="204" width="1" height="4" fill="#c8d8cc"/><rect x="238" y="208" width="1" height="2" fill="#c8d8cc" opacity="0.45"/><rect x="238" y="219" width="1" height="4" fill="#c8d8cc"/><rect x="238" y="217" width="1" height="2" fill="#c8d8cc" opacity="0.45"/><rect x="240" y="204" width="1" height="6" fill="#c8d8cc"/><rect x="240" y="210" width="1" height="2" fill="#c8d8cc" opacity="0.45"/><rect x="240" y="220" width="1" height="3" fill="#c8d8cc"/><rect x="240" y="218" width="1" height="2" fill="#c8d8cc" opacity="0.45"/><rect x="242" y="204" width="1" height="6" fill="#c8d8cc"/><rect x="242" y="210" width="1" height="2" fill="#c8d8cc" opacity="0.45"/><rect x="242" y="219" width="1" height="4" fill="#c8d8cc"/><rect x="242" y="217" width="1" height="2" fill="#c8d8cc" opacity="0.45"/><rect x="244" y="204" width="1" height="5" fill="#c8d8cc"/><rect x="244" y="209" width="1" height="2" fill="#c8d8cc" opacity="0.45"/><rect x="244" y="219" width="1" height="4" fill="#c8d8cc"/><rect x="244" y="217" width="1" height="2" fill="#c8d8cc" opacity="0.45"/><rect x="246" y="204" width="1" height="4" fill="#c8d8cc"/><rect x="246" y="208" width="1" height="2" fill="#c8d8cc" opacity="0.45"/><rect x="246" y="219" width="1" height="4" fill="#c8d8cc"/><rect x="246" y="217" width="1" height="2" fill="#c8d8cc" opacity="0.45"/><rect x="248" y="204" width="1" height="5" fill="#c8d8cc"/><rect x="248" y="209" width="1" height="2" fill="#c8d8cc" opacity="0.45"/><rect x="248" y="219" width="1" height="4" fill="#c8d8cc"/><rect x="248" y="217" width="1" height="2" fill="#c8d8cc" opacity="0.45"/><rect x="250" y="204" width="1" height="6" fill="#c8d8cc"/><rect x="250" y="210" width="1" height="2" fill="#c8d8cc" opacity="0.45"/><rect x="250" y="221" width="1" height="2" fill="#c8d8cc"/><rect x="250" y="219" width="1" height="2" fill="#c8d8cc" opacity="0.45"/><rect x="252" y="204" width="1" height="5" fill="#c8d8cc"/><rect x="252" y="209" width="1" height="2" fill="#c8d8cc" opacity="0.45"/><rect x="252" y="217" width="1" height="6" fill="#c8d8cc"/><rect x="252" y="215" width="1" height="2" fill="#c8d8cc" opacity="0.45"/><rect x="254" y="204" width="1" height="5" fill="#c8d8cc"/><rect x="254" y="209" width="1" height="2" fill="#c8d8cc" opacity="0.45"/><rect x="254" y="219" width="1" height="4" fill="#c8d8cc"/><rect x="254" y="217" width="1" height="2" fill="#c8d8cc" opacity="0.45"/><rect x="256" y="204" width="1" height="5" fill="#c8d8cc"/><rect x="256" y="209" width="1" height="2" fill="#c8d8cc" opacity="0.45"/><rect x="256" y="218" width="1" height="5" fill="#c8d8cc"/><rect x="256" y="216" width="1" height="2" fill="#c8d8cc" opacity="0.45"/><rect x="258" y="204" width="1" height="3" fill="#c8d8cc"/><rect x="258" y="207" width="1" height="2" fill="#c8d8cc" opacity="0.45"/><rect x="258" y="218" width="1" height="5" fill="#c8d8cc"/><rect x="258" y="216" width="1" height="2" fill="#c8d8cc" opacity="0.45"/><rect x="260" y="204" width="1" height="4" fill="#c8d8cc"/><rect x="260" y="208" width="1" height="2" fill="#c8d8cc" opacity="0.45"/><rect x="260" y="221" width="1" height="2" fill="#c8d8cc"/><rect x="260" y="219" width="1" height="2" fill="#c8d8cc" opacity="0.45"/><rect x="262" y="204" width="1" height="3" fill="#c8d8cc"/><rect x="262" y="207" width="1" height="2" fill="#c8d8cc" opacity="0.45"/><rect x="262" y="221" width="1" height="2" fill="#c8d8cc"/><rect x="262" y="219" width="1" height="2" fill="#c8d8cc" opacity="0.45"/><rect x="264" y="204" width="1" height="4" fill="#c8d8cc"/><rect x="264" y="208" width="1" height="2" fill="#c8d8cc" opacity="0.45"/><rect x="264" y="219" width="1" height="4" fill="#c8d8cc"/><rect x="264" y="217" width="1" height="2" fill="#c8d8cc" opacity="0.45"/><rect x="266" y="204" width="1" height="6" fill="#c8d8cc"/><rect x="266" y="210" width="1" height="2" fill="#c8d8cc" opacity="0.45"/><rect x="266" y="221" width="1" height="2" fill="#c8d8cc"/><rect x="266" y="219" width="1" height="2" fill="#c8d8cc" opacity="0.45"/><rect x="268" y="204" width="1" height="3" fill="#c8d8cc"/><rect x="268" y="207" width="1" height="2" fill="#c8d8cc" opacity="0.45"/><rect x="268" y="220" width="1" height="3" fill="#c8d8cc"/><rect x="268" y="218" width="1" height="2" fill="#c8d8cc" opacity="0.45"/><rect x="270" y="204" width="1" height="6" fill="#c8d8cc"/><rect x="270" y="210" width="1" height="2" fill="#c8d8cc" opacity="0.45"/><rect x="270" y="221" width="1" height="2" fill="#c8d8cc"/><rect x="270" y="219" width="1" height="2" fill="#c8d8cc" opacity="0.45"/><rect x="272" y="204" width="1" height="3" fill="#c8d8cc"/><rect x="272" y="207" width="1" height="2" fill="#c8d8cc" opacity="0.45"/><rect x="272" y="218" width="1" height="5" fill="#c8d8cc"/><rect x="272" y="216" width="1" height="2" fill="#c8d8cc" opacity="0.45"/><rect x="275" y="204" width="1" height="4" fill="#c8d8cc"/><rect x="275" y="208" width="1" height="2" fill="#c8d8cc" opacity="0.45"/><rect x="275" y="218" width="1" height="5" fill="#c8d8cc"/><rect x="275" y="216" width="1" height="2" fill="#c8d8cc" opacity="0.45"/><rect x="277" y="204" width="1" height="6" fill="#c8d8cc"/><rect x="277" y="210" width="1" height="2" fill="#c8d8cc" opacity="0.45"/><rect x="277" y="219" width="1" height="4" fill="#c8d8cc"/><rect x="277" y="217" width="1" height="2" fill="#c8d8cc" opacity="0.45"/><rect x="279" y="204" width="1" height="4" fill="#c8d8cc"/><rect x="279" y="208" width="1" height="2" fill="#c8d8cc" opacity="0.45"/><rect x="279" y="220" width="1" height="3" fill="#c8d8cc"/><rect x="279" y="218" width="1" height="2" fill="#c8d8cc" opacity="0.45"/><rect x="281" y="204" width="1" height="3" fill="#c8d8cc"/><rect x="281" y="207" width="1" height="2" fill="#c8d8cc" opacity="0.45"/><rect x="281" y="221" width="1" height="2" fill="#c8d8cc"/><rect x="281" y="219" width="1" height="2" fill="#c8d8cc" opacity="0.45"/><rect x="283" y="204" width="1" height="6" fill="#c8d8cc"/><rect x="283" y="210" width="1" height="2" fill="#c8d8cc" opacity="0.45"/><rect x="283" y="221" width="1" height="2" fill="#c8d8cc"/><rect x="283" y="219" width="1" height="2" fill="#c8d8cc" opacity="0.45"/><rect x="286" y="204" width="1" height="5" fill="#c8d8cc"/><rect x="286" y="209" width="1" height="2" fill="#c8d8cc" opacity="0.45"/><rect x="286" y="221" width="1" height="2" fill="#c8d8cc"/><rect x="286" y="219" width="1" height="2" fill="#c8d8cc" opacity="0.45"/><rect x="288" y="204" width="1" height="3" fill="#c8d8cc"/><rect x="288" y="207" width="1" height="2" fill="#c8d8cc" opacity="0.45"/><rect x="288" y="217" width="1" height="6" fill="#c8d8cc"/><rect x="288" y="215" width="1" height="2" fill="#c8d8cc" opacity="0.45"/><rect x="290" y="204" width="1" height="4" fill="#c8d8cc"/><rect x="290" y="208" width="1" height="2" fill="#c8d8cc" opacity="0.45"/><rect x="290" y="219" width="1" height="4" fill="#c8d8cc"/><rect x="290" y="217" width="1" height="2" fill="#c8d8cc" opacity="0.45"/><rect x="293" y="204" width="1" height="5" fill="#c8d8cc"/><rect x="293" y="209" width="1" height="2" fill="#c8d8cc" opacity="0.45"/><rect x="293" y="219" width="1" height="4" fill="#c8d8cc"/><rect x="293" y="217" width="1" height="2" fill="#c8d8cc" opacity="0.45"/><rect x="295" y="204" width="1" height="4" fill="#c8d8cc"/><rect x="295" y="208" width="1" height="2" fill="#c8d8cc" opacity="0.45"/><rect x="295" y="219" width="1" height="4" fill="#c8d8cc"/><rect x="295" y="217" width="1" height="2" fill="#c8d8cc" opacity="0.45"/><rect x="298" y="204" width="1" height="3" fill="#c8d8cc"/><rect x="298" y="207" width="1" height="2" fill="#c8d8cc" opacity="0.45"/><rect x="298" y="217" width="1" height="6" fill="#c8d8cc"/><rect x="298" y="215" width="1" height="2" fill="#c8d8cc" opacity="0.45"/><rect x="301" y="204" width="1" height="4" fill="#c8d8cc"/><rect x="301" y="208" width="1" height="2" fill="#c8d8cc" opacity="0.45"/><rect x="301" y="218" width="1" height="5" fill="#c8d8cc"/><rect x="301" y="216" width="1" height="2" fill="#c8d8cc" opacity="0.45"/><rect x="303" y="204" width="1" height="5" fill="#c8d8cc"/><rect x="303" y="209" width="1" height="2" fill="#c8d8cc" opacity="0.45"/><rect x="303" y="219" width="1" height="4" fill="#c8d8cc"/><rect x="303" y="217" width="1" height="2" fill="#c8d8cc" opacity="0.45"/><rect x="305" y="204" width="1" height="6" fill="#c8d8cc"/><rect x="305" y="210" width="1" height="2" fill="#c8d8cc" opacity="0.45"/><rect x="305" y="221" width="1" height="2" fill="#c8d8cc"/><rect x="305" y="219" width="1" height="2" fill="#c8d8cc" opacity="0.45"/><rect x="308" y="204" width="1" height="3" fill="#c8d8cc"/><rect x="308" y="207" width="1" height="2" fill="#c8d8cc" opacity="0.45"/><rect x="308" y="219" width="1" height="4" fill="#c8d8cc"/><rect x="308" y="217" width="1" height="2" fill="#c8d8cc" opacity="0.45"/><rect x="310" y="204" width="1" height="3" fill="#c8d8cc"/><rect x="310" y="207" width="1" height="2" fill="#c8d8cc" opacity="0.45"/><rect x="310" y="219" width="1" height="4" fill="#c8d8cc"/><rect x="310" y="217" width="1" height="2" fill="#c8d8cc" opacity="0.45"/><rect x="313" y="204" width="1" height="6" fill="#c8d8cc"/><rect x="313" y="210" width="1" height="2" fill="#c8d8cc" opacity="0.45"/><rect x="313" y="221" width="1" height="2" fill="#c8d8cc"/><rect x="313" y="219" width="1" height="2" fill="#c8d8cc" opacity="0.45"/><rect x="315" y="204" width="1" height="5" fill="#c8d8cc"/><rect x="315" y="209" width="1" height="2" fill="#c8d8cc" opacity="0.45"/><rect x="315" y="220" width="1" height="3" fill="#c8d8cc"/><rect x="315" y="218" width="1" height="2" fill="#c8d8cc" opacity="0.45"/><rect x="317" y="204" width="1" height="5" fill="#c8d8cc"/><rect x="317" y="209" width="1" height="2" fill="#c8d8cc" opacity="0.45"/><rect x="317" y="219" width="1" height="4" fill="#c8d8cc"/><rect x="317" y="217" width="1" height="2" fill="#c8d8cc" opacity="0.45"/><rect x="319" y="204" width="1" height="5" fill="#c8d8cc"/><rect x="319" y="209" width="1" height="2" fill="#c8d8cc" opacity="0.45"/><rect x="319" y="221" width="1" height="2" fill="#c8d8cc"/><rect x="319" y="219" width="1" height="2" fill="#c8d8cc" opacity="0.45"/><rect x="321" y="204" width="1" height="4" fill="#c8d8cc"/><rect x="321" y="208" width="1" height="2" fill="#c8d8cc" opacity="0.45"/><rect x="321" y="219" width="1" height="4" fill="#c8d8cc"/><rect x="321" y="217" width="1" height="2" fill="#c8d8cc" opacity="0.45"/><rect x="323" y="204" width="1" height="3" fill="#c8d8cc"/><rect x="323" y="207" width="1" height="2" fill="#c8d8cc" opacity="0.45"/><rect x="323" y="219" width="1" height="4" fill="#c8d8cc"/><rect x="323" y="217" width="1" height="2" fill="#c8d8cc" opacity="0.45"/><rect x="326" y="204" width="1" height="3" fill="#c8d8cc"/><rect x="326" y="207" width="1" height="2" fill="#c8d8cc" opacity="0.45"/><rect x="326" y="219" width="1" height="4" fill="#c8d8cc"/><rect x="326" y="217" width="1" height="2" fill="#c8d8cc" opacity="0.45"/><rect x="328" y="204" width="1" height="5" fill="#c8d8cc"/><rect x="328" y="209" width="1" height="2" fill="#c8d8cc" opacity="0.45"/><rect x="328" y="218" width="1" height="5" fill="#c8d8cc"/><rect x="328" y="216" width="1" height="2" fill="#c8d8cc" opacity="0.45"/><rect x="331" y="204" width="1" height="5" fill="#c8d8cc"/><rect x="331" y="209" width="1" height="2" fill="#c8d8cc" opacity="0.45"/><rect x="331" y="219" width="1" height="4" fill="#c8d8cc"/><rect x="331" y="217" width="1" height="2" fill="#c8d8cc" opacity="0.45"/><rect x="333" y="204" width="1" height="4" fill="#c8d8cc"/><rect x="333" y="208" width="1" height="2" fill="#c8d8cc" opacity="0.45"/><rect x="333" y="219" width="1" height="4" fill="#c8d8cc"/><rect x="333" y="217" width="1" height="2" fill="#c8d8cc" opacity="0.45"/><rect x="335" y="204" width="1" height="6" fill="#c8d8cc"/><rect x="335" y="210" width="1" height="2" fill="#c8d8cc" opacity="0.45"/><rect x="335" y="220" width="1" height="3" fill="#c8d8cc"/><rect x="335" y="218" width="1" height="2" fill="#c8d8cc" opacity="0.45"/><rect x="338" y="204" width="1" height="4" fill="#c8d8cc"/><rect x="338" y="208" width="1" height="2" fill="#c8d8cc" opacity="0.45"/><rect x="338" y="221" width="1" height="2" fill="#c8d8cc"/><rect x="338" y="219" width="1" height="2" fill="#c8d8cc" opacity="0.45"/><rect x="340" y="204" width="1" height="5" fill="#c8d8cc"/><rect x="340" y="209" width="1" height="2" fill="#c8d8cc" opacity="0.45"/><rect x="340" y="217" width="1" height="6" fill="#c8d8cc"/><rect x="340" y="215" width="1" height="2" fill="#c8d8cc" opacity="0.45"/><rect x="342" y="204" width="1" height="3" fill="#c8d8cc"/><rect x="342" y="207" width="1" height="2" fill="#c8d8cc" opacity="0.45"/><rect x="342" y="217" width="1" height="6" fill="#c8d8cc"/><rect x="342" y="215" width="1" height="2" fill="#c8d8cc" opacity="0.45"/><rect x="345" y="204" width="1" height="4" fill="#c8d8cc"/><rect x="345" y="208" width="1" height="2" fill="#c8d8cc" opacity="0.45"/><rect x="345" y="221" width="1" height="2" fill="#c8d8cc"/><rect x="345" y="219" width="1" height="2" fill="#c8d8cc" opacity="0.45"/><rect x="348" y="204" width="1" height="5" fill="#c8d8cc"/><rect x="348" y="209" width="1" height="2" fill="#c8d8cc" opacity="0.45"/><rect x="348" y="217" width="1" height="6" fill="#c8d8cc"/><rect x="348" y="215" width="1" height="2" fill="#c8d8cc" opacity="0.45"/><rect x="350" y="204" width="1" height="5" fill="#c8d8cc"/><rect x="350" y="209" width="1" height="2" fill="#c8d8cc" opacity="0.45"/><rect x="350" y="217" width="1" height="6" fill="#c8d8cc"/><rect x="350" y="215" width="1" height="2" fill="#c8d8cc" opacity="0.45"/><rect x="352" y="204" width="1" height="4" fill="#c8d8cc"/><rect x="352" y="208" width="1" height="2" fill="#c8d8cc" opacity="0.45"/><rect x="352" y="220" width="1" height="3" fill="#c8d8cc"/><rect x="352" y="218" width="1" height="2" fill="#c8d8cc" opacity="0.45"/><rect x="355" y="204" width="1" height="4" fill="#c8d8cc"/><rect x="355" y="208" width="1" height="2" fill="#c8d8cc" opacity="0.45"/><rect x="355" y="219" width="1" height="4" fill="#c8d8cc"/><rect x="355" y="217" width="1" height="2" fill="#c8d8cc" opacity="0.45"/><rect x="357" y="204" width="1" height="5" fill="#c8d8cc"/><rect x="357" y="209" width="1" height="2" fill="#c8d8cc" opacity="0.45"/><rect x="357" y="220" width="1" height="3" fill="#c8d8cc"/><rect x="357" y="218" width="1" height="2" fill="#c8d8cc" opacity="0.45"/><rect x="360" y="204" width="1" height="6" fill="#c8d8cc"/><rect x="360" y="210" width="1" height="2" fill="#c8d8cc" opacity="0.45"/><rect x="360" y="220" width="1" height="3" fill="#c8d8cc"/><rect x="360" y="218" width="1" height="2" fill="#c8d8cc" opacity="0.45"/><rect x="363" y="204" width="1" height="4" fill="#c8d8cc"/><rect x="363" y="208" width="1" height="2" fill="#c8d8cc" opacity="0.45"/><rect x="363" y="218" width="1" height="5" fill="#c8d8cc"/><rect x="363" y="216" width="1" height="2" fill="#c8d8cc" opacity="0.45"/><rect x="365" y="204" width="1" height="6" fill="#c8d8cc"/><rect x="365" y="210" width="1" height="2" fill="#c8d8cc" opacity="0.45"/><rect x="365" y="218" width="1" height="5" fill="#c8d8cc"/><rect x="365" y="216" width="1" height="2" fill="#c8d8cc" opacity="0.45"/><rect x="367" y="204" width="1" height="4" fill="#c8d8cc"/><rect x="367" y="208" width="1" height="2" fill="#c8d8cc" opacity="0.45"/><rect x="367" y="218" width="1" height="5" fill="#c8d8cc"/><rect x="367" y="216" width="1" height="2" fill="#c8d8cc" opacity="0.45"/><rect x="370" y="204" width="1" height="5" fill="#c8d8cc"/><rect x="370" y="209" width="1" height="2" fill="#c8d8cc" opacity="0.45"/><rect x="370" y="220" width="1" height="3" fill="#c8d8cc"/><rect x="370" y="218" width="1" height="2" fill="#c8d8cc" opacity="0.45"/><rect x="373" y="204" width="1" height="6" fill="#c8d8cc"/><rect x="373" y="210" width="1" height="2" fill="#c8d8cc" opacity="0.45"/><rect x="373" y="218" width="1" height="5" fill="#c8d8cc"/><rect x="373" y="216" width="1" height="2" fill="#c8d8cc" opacity="0.45"/><rect x="376" y="204" width="1" height="4" fill="#c8d8cc"/><rect x="376" y="208" width="1" height="2" fill="#c8d8cc" opacity="0.45"/><rect x="376" y="219" width="1" height="4" fill="#c8d8cc"/><rect x="376" y="217" width="1" height="2" fill="#c8d8cc" opacity="0.45"/><rect x="379" y="204" width="1" height="6" fill="#c8d8cc"/><rect x="379" y="210" width="1" height="2" fill="#c8d8cc" opacity="0.45"/><rect x="379" y="219" width="1" height="4" fill="#c8d8cc"/><rect x="379" y="217" width="1" height="2" fill="#c8d8cc" opacity="0.45"/><rect x="381" y="204" width="1" height="4" fill="#c8d8cc"/><rect x="381" y="208" width="1" height="2" fill="#c8d8cc" opacity="0.45"/><rect x="381" y="220" width="1" height="3" fill="#c8d8cc"/><rect x="381" y="218" width="1" height="2" fill="#c8d8cc" opacity="0.45"/><rect x="384" y="204" width="1" height="5" fill="#c8d8cc"/><rect x="384" y="209" width="1" height="2" fill="#c8d8cc" opacity="0.45"/><rect x="384" y="217" width="1" height="6" fill="#c8d8cc"/><rect x="384" y="215" width="1" height="2" fill="#c8d8cc" opacity="0.45"/><rect x="386" y="204" width="1" height="5" fill="#c8d8cc"/><rect x="386" y="209" width="1" height="2" fill="#c8d8cc" opacity="0.45"/><rect x="386" y="220" width="1" height="3" fill="#c8d8cc"/><rect x="386" y="218" width="1" height="2" fill="#c8d8cc" opacity="0.45"/><rect x="389" y="204" width="1" height="4" fill="#c8d8cc"/><rect x="389" y="208" width="1" height="2" fill="#c8d8cc" opacity="0.45"/><rect x="389" y="217" width="1" height="6" fill="#c8d8cc"/><rect x="389" y="215" width="1" height="2" fill="#c8d8cc" opacity="0.45"/><rect x="391" y="204" width="1" height="4" fill="#c8d8cc"/><rect x="391" y="208" width="1" height="2" fill="#c8d8cc" opacity="0.45"/><rect x="391" y="217" width="1" height="6" fill="#c8d8cc"/><rect x="391" y="215" width="1" height="2" fill="#c8d8cc" opacity="0.45"/><rect x="393" y="204" width="1" height="4" fill="#c8d8cc"/><rect x="393" y="208" width="1" height="2" fill="#c8d8cc" opacity="0.45"/><rect x="393" y="217" width="1" height="6" fill="#c8d8cc"/><rect x="393" y="215" width="1" height="2" fill="#c8d8cc" opacity="0.45"/><rect x="396" y="204" width="1" height="5" fill="#c8d8cc"/><rect x="396" y="209" width="1" height="2" fill="#c8d8cc" opacity="0.45"/><rect x="396" y="218" width="1" height="5" fill="#c8d8cc"/><rect x="396" y="216" width="1" height="2" fill="#c8d8cc" opacity="0.45"/><rect x="399" y="204" width="1" height="4" fill="#c8d8cc"/><rect x="399" y="208" width="1" height="2" fill="#c8d8cc" opacity="0.45"/><rect x="399" y="220" width="1" height="3" fill="#c8d8cc"/><rect x="399" y="218" width="1" height="2" fill="#c8d8cc" opacity="0.45"/><rect x="402" y="204" width="1" height="4" fill="#c8d8cc"/><rect x="402" y="208" width="1" height="2" fill="#c8d8cc" opacity="0.45"/><rect x="402" y="219" width="1" height="4" fill="#c8d8cc"/><rect x="402" y="217" width="1" height="2" fill="#c8d8cc" opacity="0.45"/><rect x="404" y="204" width="1" height="4" fill="#c8d8cc"/><rect x="404" y="208" width="1" height="2" fill="#c8d8cc" opacity="0.45"/><rect x="404" y="217" width="1" height="6" fill="#c8d8cc"/><rect x="404" y="215" width="1" height="2" fill="#c8d8cc" opacity="0.45"/><rect x="406" y="204" width="1" height="4" fill="#c8d8cc"/><rect x="406" y="208" width="1" height="2" fill="#c8d8cc" opacity="0.45"/><rect x="406" y="219" width="1" height="4" fill="#c8d8cc"/><rect x="406" y="217" width="1" height="2" fill="#c8d8cc" opacity="0.45"/><rect x="408" y="204" width="1" height="4" fill="#c8d8cc"/><rect x="408" y="208" width="1" height="2" fill="#c8d8cc" opacity="0.45"/><rect x="408" y="219" width="1" height="4" fill="#c8d8cc"/><rect x="408" y="217" width="1" height="2" fill="#c8d8cc" opacity="0.45"/><rect x="411" y="204" width="1" height="5" fill="#c8d8cc"/><rect x="411" y="209" width="1" height="2" fill="#c8d8cc" opacity="0.45"/><rect x="411" y="219" width="1" height="4" fill="#c8d8cc"/><rect x="411" y="217" width="1" height="2" fill="#c8d8cc" opacity="0.45"/><rect x="413" y="204" width="1" height="3" fill="#c8d8cc"/><rect x="413" y="207" width="1" height="2" fill="#c8d8cc" opacity="0.45"/><rect x="413" y="217" width="1" height="6" fill="#c8d8cc"/><rect x="413" y="215" width="1" height="2" fill="#c8d8cc" opacity="0.45"/><rect x="415" y="204" width="1" height="4" fill="#c8d8cc"/><rect x="415" y="208" width="1" height="2" fill="#c8d8cc" opacity="0.45"/><rect x="415" y="220" width="1" height="3" fill="#c8d8cc"/><rect x="415" y="218" width="1" height="2" fill="#c8d8cc" opacity="0.45"/><rect x="418" y="204" width="1" height="5" fill="#c8d8cc"/><rect x="418" y="209" width="1" height="2" fill="#c8d8cc" opacity="0.45"/><rect x="418" y="221" width="1" height="2" fill="#c8d8cc"/><rect x="418" y="219" width="1" height="2" fill="#c8d8cc" opacity="0.45"/><rect x="420" y="204" width="1" height="5" fill="#c8d8cc"/><rect x="420" y="209" width="1" height="2" fill="#c8d8cc" opacity="0.45"/><rect x="420" y="219" width="1" height="4" fill="#c8d8cc"/><rect x="420" y="217" width="1" height="2" fill="#c8d8cc" opacity="0.45"/><rect x="422" y="204" width="1" height="5" fill="#c8d8cc"/><rect x="422" y="209" width="1" height="2" fill="#c8d8cc" opacity="0.45"/><rect x="422" y="217" width="1" height="6" fill="#c8d8cc"/><rect x="422" y="215" width="1" height="2" fill="#c8d8cc" opacity="0.45"/><rect x="425" y="204" width="1" height="5" fill="#c8d8cc"/><rect x="425" y="209" width="1" height="2" fill="#c8d8cc" opacity="0.45"/><rect x="425" y="221" width="1" height="2" fill="#c8d8cc"/><rect x="425" y="219" width="1" height="2" fill="#c8d8cc" opacity="0.45"/><rect x="427" y="204" width="1" height="4" fill="#c8d8cc"/><rect x="427" y="208" width="1" height="2" fill="#c8d8cc" opacity="0.45"/><rect x="427" y="218" width="1" height="5" fill="#c8d8cc"/><rect x="427" y="216" width="1" height="2" fill="#c8d8cc" opacity="0.45"/><rect x="430" y="204" width="1" height="3" fill="#c8d8cc"/><rect x="430" y="207" width="1" height="2" fill="#c8d8cc" opacity="0.45"/><rect x="430" y="217" width="1" height="6" fill="#c8d8cc"/><rect x="430" y="215" width="1" height="2" fill="#c8d8cc" opacity="0.45"/><rect x="432" y="204" width="1" height="5" fill="#c8d8cc"/><rect x="432" y="209" width="1" height="2" fill="#c8d8cc" opacity="0.45"/><rect x="432" y="217" width="1" height="6" fill="#c8d8cc"/><rect x="432" y="215" width="1" height="2" fill="#c8d8cc" opacity="0.45"/><rect x="434" y="204" width="1" height="5" fill="#c8d8cc"/><rect x="434" y="209" width="1" height="2" fill="#c8d8cc" opacity="0.45"/><rect x="434" y="217" width="1" height="6" fill="#c8d8cc"/><rect x="434" y="215" width="1" height="2" fill="#c8d8cc" opacity="0.45"/><rect x="437" y="204" width="1" height="4" fill="#c8d8cc"/><rect x="437" y="208" width="1" height="2" fill="#c8d8cc" opacity="0.45"/><rect x="437" y="217" width="1" height="6" fill="#c8d8cc"/><rect x="437" y="215" width="1" height="2" fill="#c8d8cc" opacity="0.45"/><rect x="439" y="204" width="1" height="4" fill="#c8d8cc"/><rect x="439" y="208" width="1" height="2" fill="#c8d8cc" opacity="0.45"/><rect x="439" y="217" width="1" height="6" fill="#c8d8cc"/><rect x="439" y="215" width="1" height="2" fill="#c8d8cc" opacity="0.45"/><rect x="441" y="204" width="1" height="6" fill="#c8d8cc"/><rect x="441" y="210" width="1" height="2" fill="#c8d8cc" opacity="0.45"/><rect x="441" y="221" width="1" height="2" fill="#c8d8cc"/><rect x="441" y="219" width="1" height="2" fill="#c8d8cc" opacity="0.45"/><rect x="444" y="204" width="1" height="5" fill="#c8d8cc"/><rect x="444" y="209" width="1" height="2" fill="#c8d8cc" opacity="0.45"/><rect x="444" y="219" width="1" height="4" fill="#c8d8cc"/><rect x="444" y="217" width="1" height="2" fill="#c8d8cc" opacity="0.45"/><rect x="447" y="204" width="1" height="6" fill="#c8d8cc"/><rect x="447" y="210" width="1" height="2" fill="#c8d8cc" opacity="0.45"/><rect x="447" y="217" width="1" height="6" fill="#c8d8cc"/><rect x="447" y="215" width="1" height="2" fill="#c8d8cc" opacity="0.45"/><rect x="449" y="204" width="1" height="5" fill="#c8d8cc"/><rect x="449" y="209" width="1" height="2" fill="#c8d8cc" opacity="0.45"/><rect x="449" y="220" width="1" height="3" fill="#c8d8cc"/><rect x="449" y="218" width="1" height="2" fill="#c8d8cc" opacity="0.45"/><rect x="452" y="204" width="1" height="6" fill="#c8d8cc"/><rect x="452" y="210" width="1" height="2" fill="#c8d8cc" opacity="0.45"/><rect x="452" y="217" width="1" height="6" fill="#c8d8cc"/><rect x="452" y="215" width="1" height="2" fill="#c8d8cc" opacity="0.45"/><rect x="454" y="204" width="1" height="4" fill="#c8d8cc"/><rect x="454" y="208" width="1" height="2" fill="#c8d8cc" opacity="0.45"/><rect x="454" y="219" width="1" height="4" fill="#c8d8cc"/><rect x="454" y="217" width="1" height="2" fill="#c8d8cc" opacity="0.45"/><rect x="457" y="204" width="1" height="5" fill="#c8d8cc"/><rect x="457" y="209" width="1" height="2" fill="#c8d8cc" opacity="0.45"/><rect x="457" y="221" width="1" height="2" fill="#c8d8cc"/><rect x="457" y="219" width="1" height="2" fill="#c8d8cc" opacity="0.45"/><rect x="459" y="204" width="1" height="5" fill="#c8d8cc"/><rect x="459" y="209" width="1" height="2" fill="#c8d8cc" opacity="0.45"/><rect x="459" y="218" width="1" height="5" fill="#c8d8cc"/><rect x="459" y="216" width="1" height="2" fill="#c8d8cc" opacity="0.45"/><rect x="461" y="204" width="1" height="6" fill="#c8d8cc"/><rect x="461" y="210" width="1" height="2" fill="#c8d8cc" opacity="0.45"/><rect x="461" y="219" width="1" height="4" fill="#c8d8cc"/><rect x="461" y="217" width="1" height="2" fill="#c8d8cc" opacity="0.45"/><rect x="463" y="204" width="1" height="5" fill="#c8d8cc"/><rect x="463" y="209" width="1" height="2" fill="#c8d8cc" opacity="0.45"/><rect x="463" y="219" width="1" height="4" fill="#c8d8cc"/><rect x="463" y="217" width="1" height="2" fill="#c8d8cc" opacity="0.45"/><rect x="465" y="204" width="1" height="3" fill="#c8d8cc"/><rect x="465" y="207" width="1" height="2" fill="#c8d8cc" opacity="0.45"/><rect x="465" y="219" width="1" height="4" fill="#c8d8cc"/><rect x="465" y="217" width="1" height="2" fill="#c8d8cc" opacity="0.45"/><rect x="467" y="204" width="1" height="4" fill="#c8d8cc"/><rect x="467" y="208" width="1" height="2" fill="#c8d8cc" opacity="0.45"/><rect x="467" y="220" width="1" height="3" fill="#c8d8cc"/><rect x="467" y="218" width="1" height="2" fill="#c8d8cc" opacity="0.45"/><rect x="469" y="204" width="1" height="5" fill="#c8d8cc"/><rect x="469" y="209" width="1" height="2" fill="#c8d8cc" opacity="0.45"/><rect x="469" y="219" width="1" height="4" fill="#c8d8cc"/><rect x="469" y="217" width="1" height="2" fill="#c8d8cc" opacity="0.45"/><rect x="471" y="204" width="1" height="5" fill="#c8d8cc"/><rect x="471" y="209" width="1" height="2" fill="#c8d8cc" opacity="0.45"/><rect x="471" y="219" width="1" height="4" fill="#c8d8cc"/><rect x="471" y="217" width="1" height="2" fill="#c8d8cc" opacity="0.45"/><rect x="473" y="204" width="1" height="4" fill="#c8d8cc"/><rect x="473" y="208" width="1" height="2" fill="#c8d8cc" opacity="0.45"/><rect x="473" y="217" width="1" height="6" fill="#c8d8cc"/><rect x="473" y="215" width="1" height="2" fill="#c8d8cc" opacity="0.45"/><rect x="476" y="204" width="1" height="5" fill="#c8d8cc"/><rect x="476" y="209" width="1" height="2" fill="#c8d8cc" opacity="0.45"/><rect x="476" y="221" width="1" height="2" fill="#c8d8cc"/><rect x="476" y="219" width="1" height="2" fill="#c8d8cc" opacity="0.45"/><rect x="479" y="204" width="1" height="5" fill="#c8d8cc"/><rect x="479" y="209" width="1" height="2" fill="#c8d8cc" opacity="0.45"/><rect x="479" y="219" width="1" height="4" fill="#c8d8cc"/><rect x="479" y="217" width="1" height="2" fill="#c8d8cc" opacity="0.45"/><rect x="482" y="204" width="1" height="6" fill="#c8d8cc"/><rect x="482" y="210" width="1" height="2" fill="#c8d8cc" opacity="0.45"/><rect x="482" y="219" width="1" height="4" fill="#c8d8cc"/><rect x="482" y="217" width="1" height="2" fill="#c8d8cc" opacity="0.45"/><rect x="484" y="204" width="1" height="6" fill="#c8d8cc"/><rect x="484" y="210" width="1" height="2" fill="#c8d8cc" opacity="0.45"/><rect x="484" y="220" width="1" height="3" fill="#c8d8cc"/><rect x="484" y="218" width="1" height="2" fill="#c8d8cc" opacity="0.45"/><rect x="487" y="204" width="1" height="5" fill="#c8d8cc"/><rect x="487" y="209" width="1" height="2" fill="#c8d8cc" opacity="0.45"/><rect x="487" y="221" width="1" height="2" fill="#c8d8cc"/><rect x="487" y="219" width="1" height="2" fill="#c8d8cc" opacity="0.45"/><rect x="489" y="204" width="1" height="4" fill="#c8d8cc"/><rect x="489" y="208" width="1" height="2" fill="#c8d8cc" opacity="0.45"/><rect x="489" y="217" width="1" height="6" fill="#c8d8cc"/><rect x="489" y="215" width="1" height="2" fill="#c8d8cc" opacity="0.45"/><rect x="491" y="204" width="1" height="4" fill="#c8d8cc"/><rect x="491" y="208" width="1" height="2" fill="#c8d8cc" opacity="0.45"/><rect x="491" y="219" width="1" height="4" fill="#c8d8cc"/><rect x="491" y="217" width="1" height="2" fill="#c8d8cc" opacity="0.45"/><rect x="494" y="204" width="1" height="5" fill="#c8d8cc"/><rect x="494" y="209" width="1" height="2" fill="#c8d8cc" opacity="0.45"/><rect x="494" y="221" width="1" height="2" fill="#c8d8cc"/><rect x="494" y="219" width="1" height="2" fill="#c8d8cc" opacity="0.45"/><rect x="496" y="204" width="1" height="3" fill="#c8d8cc"/><rect x="496" y="207" width="1" height="2" fill="#c8d8cc" opacity="0.45"/><rect x="496" y="219" width="1" height="4" fill="#c8d8cc"/><rect x="496" y="217" width="1" height="2" fill="#c8d8cc" opacity="0.45"/><rect x="499" y="204" width="1" height="6" fill="#c8d8cc"/><rect x="499" y="210" width="1" height="2" fill="#c8d8cc" opacity="0.45"/><rect x="499" y="217" width="1" height="6" fill="#c8d8cc"/><rect x="499" y="215" width="1" height="2" fill="#c8d8cc" opacity="0.45"/><rect x="502" y="204" width="1" height="5" fill="#c8d8cc"/><rect x="502" y="209" width="1" height="2" fill="#c8d8cc" opacity="0.45"/><rect x="502" y="219" width="1" height="4" fill="#c8d8cc"/><rect x="502" y="217" width="1" height="2" fill="#c8d8cc" opacity="0.45"/><rect x="504" y="204" width="1" height="4" fill="#c8d8cc"/><rect x="504" y="208" width="1" height="2" fill="#c8d8cc" opacity="0.45"/><rect x="504" y="219" width="1" height="4" fill="#c8d8cc"/><rect x="504" y="217" width="1" height="2" fill="#c8d8cc" opacity="0.45"/><rect x="507" y="204" width="1" height="5" fill="#c8d8cc"/><rect x="507" y="209" width="1" height="2" fill="#c8d8cc" opacity="0.45"/><rect x="507" y="220" width="1" height="3" fill="#c8d8cc"/><rect x="507" y="218" width="1" height="2" fill="#c8d8cc" opacity="0.45"/><rect x="510" y="204" width="1" height="5" fill="#c8d8cc"/><rect x="510" y="209" width="1" height="2" fill="#c8d8cc" opacity="0.45"/><rect x="510" y="220" width="1" height="3" fill="#c8d8cc"/><rect x="510" y="218" width="1" height="2" fill="#c8d8cc" opacity="0.45"/><rect x="512" y="204" width="1" height="4" fill="#c8d8cc"/><rect x="512" y="208" width="1" height="2" fill="#c8d8cc" opacity="0.45"/><rect x="512" y="221" width="1" height="2" fill="#c8d8cc"/><rect x="512" y="219" width="1" height="2" fill="#c8d8cc" opacity="0.45"/><rect x="514" y="204" width="1" height="5" fill="#c8d8cc"/><rect x="514" y="209" width="1" height="2" fill="#c8d8cc" opacity="0.45"/><rect x="514" y="217" width="1" height="6" fill="#c8d8cc"/><rect x="514" y="215" width="1" height="2" fill="#c8d8cc" opacity="0.45"/><rect x="516" y="204" width="1" height="6" fill="#c8d8cc"/><rect x="516" y="210" width="1" height="2" fill="#c8d8cc" opacity="0.45"/><rect x="516" y="220" width="1" height="3" fill="#c8d8cc"/><rect x="516" y="218" width="1" height="2" fill="#c8d8cc" opacity="0.45"/><rect x="518" y="204" width="1" height="4" fill="#c8d8cc"/><rect x="518" y="208" width="1" height="2" fill="#c8d8cc" opacity="0.45"/><rect x="518" y="217" width="1" height="6" fill="#c8d8cc"/><rect x="518" y="215" width="1" height="2" fill="#c8d8cc" opacity="0.45"/><rect x="521" y="204" width="1" height="5" fill="#c8d8cc"/><rect x="521" y="209" width="1" height="2" fill="#c8d8cc" opacity="0.45"/><rect x="521" y="219" width="1" height="4" fill="#c8d8cc"/><rect x="521" y="217" width="1" height="2" fill="#c8d8cc" opacity="0.45"/><rect x="523" y="204" width="1" height="6" fill="#c8d8cc"/><rect x="523" y="210" width="1" height="2" fill="#c8d8cc" opacity="0.45"/><rect x="523" y="220" width="1" height="3" fill="#c8d8cc"/><rect x="523" y="218" width="1" height="2" fill="#c8d8cc" opacity="0.45"/><rect x="526" y="204" width="1" height="4" fill="#c8d8cc"/><rect x="526" y="208" width="1" height="2" fill="#c8d8cc" opacity="0.45"/><rect x="526" y="220" width="1" height="3" fill="#c8d8cc"/><rect x="526" y="218" width="1" height="2" fill="#c8d8cc" opacity="0.45"/><rect x="529" y="204" width="1" height="6" fill="#c8d8cc"/><rect x="529" y="210" width="1" height="2" fill="#c8d8cc" opacity="0.45"/><rect x="529" y="219" width="1" height="4" fill="#c8d8cc"/><rect x="529" y="217" width="1" height="2" fill="#c8d8cc" opacity="0.45"/><rect x="532" y="204" width="1" height="5" fill="#c8d8cc"/><rect x="532" y="209" width="1" height="2" fill="#c8d8cc" opacity="0.45"/><rect x="532" y="217" width="1" height="6" fill="#c8d8cc"/><rect x="532" y="215" width="1" height="2" fill="#c8d8cc" opacity="0.45"/><rect x="534" y="204" width="1" height="5" fill="#c8d8cc"/><rect x="534" y="209" width="1" height="2" fill="#c8d8cc" opacity="0.45"/><rect x="534" y="221" width="1" height="2" fill="#c8d8cc"/><rect x="534" y="219" width="1" height="2" fill="#c8d8cc" opacity="0.45"/><rect x="537" y="204" width="1" height="4" fill="#c8d8cc"/><rect x="537" y="208" width="1" height="2" fill="#c8d8cc" opacity="0.45"/><rect x="537" y="220" width="1" height="3" fill="#c8d8cc"/><rect x="537" y="218" width="1" height="2" fill="#c8d8cc" opacity="0.45"/><rect x="540" y="204" width="1" height="4" fill="#c8d8cc"/><rect x="540" y="208" width="1" height="2" fill="#c8d8cc" opacity="0.45"/><rect x="540" y="219" width="1" height="4" fill="#c8d8cc"/><rect x="540" y="217" width="1" height="2" fill="#c8d8cc" opacity="0.45"/><rect x="543" y="204" width="1" height="5" fill="#c8d8cc"/><rect x="543" y="209" width="1" height="2" fill="#c8d8cc" opacity="0.45"/><rect x="543" y="218" width="1" height="5" fill="#c8d8cc"/><rect x="543" y="216" width="1" height="2" fill="#c8d8cc" opacity="0.45"/><rect x="545" y="204" width="1" height="6" fill="#c8d8cc"/><rect x="545" y="210" width="1" height="2" fill="#c8d8cc" opacity="0.45"/><rect x="545" y="219" width="1" height="4" fill="#c8d8cc"/><rect x="545" y="217" width="1" height="2" fill="#c8d8cc" opacity="0.45"/><rect x="547" y="204" width="1" height="4" fill="#c8d8cc"/><rect x="547" y="208" width="1" height="2" fill="#c8d8cc" opacity="0.45"/><rect x="547" y="219" width="1" height="4" fill="#c8d8cc"/><rect x="547" y="217" width="1" height="2" fill="#c8d8cc" opacity="0.45"/><rect x="549" y="204" width="1" height="3" fill="#c8d8cc"/><rect x="549" y="207" width="1" height="2" fill="#c8d8cc" opacity="0.45"/><rect x="549" y="218" width="1" height="5" fill="#c8d8cc"/><rect x="549" y="216" width="1" height="2" fill="#c8d8cc" opacity="0.45"/><rect x="552" y="204" width="1" height="4" fill="#c8d8cc"/><rect x="552" y="208" width="1" height="2" fill="#c8d8cc" opacity="0.45"/><rect x="552" y="218" width="1" height="5" fill="#c8d8cc"/><rect x="552" y="216" width="1" height="2" fill="#c8d8cc" opacity="0.45"/><rect x="555" y="204" width="1" height="6" fill="#c8d8cc"/><rect x="555" y="210" width="1" height="2" fill="#c8d8cc" opacity="0.45"/><rect x="555" y="218" width="1" height="5" fill="#c8d8cc"/><rect x="555" y="216" width="1" height="2" fill="#c8d8cc" opacity="0.45"/><rect x="557" y="204" width="1" height="6" fill="#c8d8cc"/><rect x="557" y="210" width="1" height="2" fill="#c8d8cc" opacity="0.45"/><rect x="557" y="221" width="1" height="2" fill="#c8d8cc"/><rect x="557" y="219" width="1" height="2" fill="#c8d8cc" opacity="0.45"/><rect x="559" y="204" width="1" height="3" fill="#c8d8cc"/><rect x="559" y="207" width="1" height="2" fill="#c8d8cc" opacity="0.45"/><rect x="559" y="217" width="1" height="6" fill="#c8d8cc"/><rect x="559" y="215" width="1" height="2" fill="#c8d8cc" opacity="0.45"/><rect x="562" y="204" width="1" height="4" fill="#c8d8cc"/><rect x="562" y="208" width="1" height="2" fill="#c8d8cc" opacity="0.45"/><rect x="562" y="218" width="1" height="5" fill="#c8d8cc"/><rect x="562" y="216" width="1" height="2" fill="#c8d8cc" opacity="0.45"/><rect x="564" y="204" width="1" height="5" fill="#c8d8cc"/><rect x="564" y="209" width="1" height="2" fill="#c8d8cc" opacity="0.45"/><rect x="564" y="220" width="1" height="3" fill="#c8d8cc"/><rect x="564" y="218" width="1" height="2" fill="#c8d8cc" opacity="0.45"/><rect x="566" y="204" width="1" height="4" fill="#c8d8cc"/><rect x="566" y="208" width="1" height="2" fill="#c8d8cc" opacity="0.45"/><rect x="566" y="219" width="1" height="4" fill="#c8d8cc"/><rect x="566" y="217" width="1" height="2" fill="#c8d8cc" opacity="0.45"/><rect x="569" y="204" width="1" height="4" fill="#c8d8cc"/><rect x="569" y="208" width="1" height="2" fill="#c8d8cc" opacity="0.45"/><rect x="569" y="220" width="1" height="3" fill="#c8d8cc"/><rect x="569" y="218" width="1" height="2" fill="#c8d8cc" opacity="0.45"/><rect x="572" y="204" width="1" height="5" fill="#c8d8cc"/><rect x="572" y="209" width="1" height="2" fill="#c8d8cc" opacity="0.45"/><rect x="572" y="220" width="1" height="3" fill="#c8d8cc"/><rect x="572" y="218" width="1" height="2" fill="#c8d8cc" opacity="0.45"/><rect x="574" y="204" width="1" height="6" fill="#c8d8cc"/><rect x="574" y="210" width="1" height="2" fill="#c8d8cc" opacity="0.45"/><rect x="574" y="218" width="1" height="5" fill="#c8d8cc"/><rect x="574" y="216" width="1" height="2" fill="#c8d8cc" opacity="0.45"/><rect x="576" y="204" width="1" height="6" fill="#c8d8cc"/><rect x="576" y="210" width="1" height="2" fill="#c8d8cc" opacity="0.45"/><rect x="576" y="218" width="1" height="5" fill="#c8d8cc"/><rect x="576" y="216" width="1" height="2" fill="#c8d8cc" opacity="0.45"/><rect x="579" y="204" width="1" height="4" fill="#c8d8cc"/><rect x="579" y="208" width="1" height="2" fill="#c8d8cc" opacity="0.45"/><rect x="579" y="219" width="1" height="4" fill="#c8d8cc"/><rect x="579" y="217" width="1" height="2" fill="#c8d8cc" opacity="0.45"/><rect x="581" y="204" width="1" height="5" fill="#c8d8cc"/><rect x="581" y="209" width="1" height="2" fill="#c8d8cc" opacity="0.45"/><rect x="581" y="221" width="1" height="2" fill="#c8d8cc"/><rect x="581" y="219" width="1" height="2" fill="#c8d8cc" opacity="0.45"/><rect x="584" y="204" width="1" height="6" fill="#c8d8cc"/><rect x="584" y="210" width="1" height="2" fill="#c8d8cc" opacity="0.45"/><rect x="584" y="221" width="1" height="2" fill="#c8d8cc"/><rect x="584" y="219" width="1" height="2" fill="#c8d8cc" opacity="0.45"/><rect x="586" y="204" width="1" height="3" fill="#c8d8cc"/><rect x="586" y="207" width="1" height="2" fill="#c8d8cc" opacity="0.45"/><rect x="586" y="219" width="1" height="4" fill="#c8d8cc"/><rect x="586" y="217" width="1" height="2" fill="#c8d8cc" opacity="0.45"/><rect x="589" y="204" width="1" height="4" fill="#c8d8cc"/><rect x="589" y="208" width="1" height="2" fill="#c8d8cc" opacity="0.45"/><rect x="589" y="220" width="1" height="3" fill="#c8d8cc"/><rect x="589" y="218" width="1" height="2" fill="#c8d8cc" opacity="0.45"/><rect x="592" y="204" width="1" height="5" fill="#c8d8cc"/><rect x="592" y="209" width="1" height="2" fill="#c8d8cc" opacity="0.45"/><rect x="592" y="218" width="1" height="5" fill="#c8d8cc"/><rect x="592" y="216" width="1" height="2" fill="#c8d8cc" opacity="0.45"/><rect x="594" y="204" width="1" height="5" fill="#c8d8cc"/><rect x="594" y="209" width="1" height="2" fill="#c8d8cc" opacity="0.45"/><rect x="594" y="219" width="1" height="4" fill="#c8d8cc"/><rect x="594" y="217" width="1" height="2" fill="#c8d8cc" opacity="0.45"/><rect x="596" y="204" width="1" height="6" fill="#c8d8cc"/><rect x="596" y="210" width="1" height="2" fill="#c8d8cc" opacity="0.45"/><rect x="596" y="219" width="1" height="4" fill="#c8d8cc"/><rect x="596" y="217" width="1" height="2" fill="#c8d8cc" opacity="0.45"/><rect x="598" y="204" width="1" height="5" fill="#c8d8cc"/><rect x="598" y="209" width="1" height="2" fill="#c8d8cc" opacity="0.45"/><rect x="598" y="220" width="1" height="3" fill="#c8d8cc"/><rect x="598" y="218" width="1" height="2" fill="#c8d8cc" opacity="0.45"/><rect x="600" y="204" width="1" height="5" fill="#c8d8cc"/><rect x="600" y="209" width="1" height="2" fill="#c8d8cc" opacity="0.45"/><rect x="600" y="217" width="1" height="6" fill="#c8d8cc"/><rect x="600" y="215" width="1" height="2" fill="#c8d8cc" opacity="0.45"/><rect x="602" y="204" width="1" height="4" fill="#c8d8cc"/><rect x="602" y="208" width="1" height="2" fill="#c8d8cc" opacity="0.45"/><rect x="602" y="219" width="1" height="4" fill="#c8d8cc"/><rect x="602" y="217" width="1" height="2" fill="#c8d8cc" opacity="0.45"/><rect x="605" y="204" width="1" height="6" fill="#c8d8cc"/><rect x="605" y="210" width="1" height="2" fill="#c8d8cc" opacity="0.45"/><rect x="605" y="218" width="1" height="5" fill="#c8d8cc"/><rect x="605" y="216" width="1" height="2" fill="#c8d8cc" opacity="0.45"/><rect x="608" y="204" width="1" height="6" fill="#c8d8cc"/><rect x="608" y="210" width="1" height="2" fill="#c8d8cc" opacity="0.45"/><rect x="608" y="219" width="1" height="4" fill="#c8d8cc"/><rect x="608" y="217" width="1" height="2" fill="#c8d8cc" opacity="0.45"/><rect x="611" y="204" width="1" height="4" fill="#c8d8cc"/><rect x="611" y="208" width="1" height="2" fill="#c8d8cc" opacity="0.45"/><rect x="611" y="219" width="1" height="4" fill="#c8d8cc"/><rect x="611" y="217" width="1" height="2" fill="#c8d8cc" opacity="0.45"/><rect x="614" y="204" width="1" height="6" fill="#c8d8cc"/><rect x="614" y="210" width="1" height="2" fill="#c8d8cc" opacity="0.45"/><rect x="614" y="221" width="1" height="2" fill="#c8d8cc"/><rect x="614" y="219" width="1" height="2" fill="#c8d8cc" opacity="0.45"/><rect x="616" y="204" width="1" height="6" fill="#c8d8cc"/><rect x="616" y="210" width="1" height="2" fill="#c8d8cc" opacity="0.45"/><rect x="616" y="219" width="1" height="4" fill="#c8d8cc"/><rect x="616" y="217" width="1" height="2" fill="#c8d8cc" opacity="0.45"/><rect x="618" y="204" width="1" height="3" fill="#c8d8cc"/><rect x="618" y="207" width="1" height="2" fill="#c8d8cc" opacity="0.45"/><rect x="618" y="218" width="1" height="5" fill="#c8d8cc"/><rect x="618" y="216" width="1" height="2" fill="#c8d8cc" opacity="0.45"/><rect x="620" y="204" width="1" height="6" fill="#c8d8cc"/><rect x="620" y="210" width="1" height="2" fill="#c8d8cc" opacity="0.45"/><rect x="620" y="217" width="1" height="6" fill="#c8d8cc"/><rect x="620" y="215" width="1" height="2" fill="#c8d8cc" opacity="0.45"/><rect x="623" y="204" width="1" height="3" fill="#c8d8cc"/><rect x="623" y="207" width="1" height="2" fill="#c8d8cc" opacity="0.45"/><rect x="623" y="218" width="1" height="5" fill="#c8d8cc"/><rect x="623" y="216" width="1" height="2" fill="#c8d8cc" opacity="0.45"/><rect x="626" y="204" width="1" height="5" fill="#c8d8cc"/><rect x="626" y="209" width="1" height="2" fill="#c8d8cc" opacity="0.45"/><rect x="626" y="220" width="1" height="3" fill="#c8d8cc"/><rect x="626" y="218" width="1" height="2" fill="#c8d8cc" opacity="0.45"/><rect x="628" y="204" width="1" height="4" fill="#c8d8cc"/><rect x="628" y="208" width="1" height="2" fill="#c8d8cc" opacity="0.45"/><rect x="628" y="217" width="1" height="6" fill="#c8d8cc"/><rect x="628" y="215" width="1" height="2" fill="#c8d8cc" opacity="0.45"/><rect x="631" y="204" width="1" height="6" fill="#c8d8cc"/><rect x="631" y="210" width="1" height="2" fill="#c8d8cc" opacity="0.45"/><rect x="631" y="220" width="1" height="3" fill="#c8d8cc"/><rect x="631" y="218" width="1" height="2" fill="#c8d8cc" opacity="0.45"/><rect x="634" y="204" width="1" height="3" fill="#c8d8cc"/><rect x="634" y="207" width="1" height="2" fill="#c8d8cc" opacity="0.45"/><rect x="634" y="217" width="1" height="6" fill="#c8d8cc"/><rect x="634" y="215" width="1" height="2" fill="#c8d8cc" opacity="0.45"/><rect x="637" y="204" width="1" height="4" fill="#c8d8cc"/><rect x="637" y="208" width="1" height="2" fill="#c8d8cc" opacity="0.45"/><rect x="637" y="219" width="1" height="4" fill="#c8d8cc"/><rect x="637" y="217" width="1" height="2" fill="#c8d8cc" opacity="0.45"/><rect x="639" y="204" width="1" height="5" fill="#c8d8cc"/><rect x="639" y="209" width="1" height="2" fill="#c8d8cc" opacity="0.45"/><rect x="639" y="220" width="1" height="3" fill="#c8d8cc"/><rect x="639" y="218" width="1" height="2" fill="#c8d8cc" opacity="0.45"/><rect x="642" y="204" width="1" height="5" fill="#c8d8cc"/><rect x="642" y="209" width="1" height="2" fill="#c8d8cc" opacity="0.45"/><rect x="642" y="219" width="1" height="4" fill="#c8d8cc"/><rect x="642" y="217" width="1" height="2" fill="#c8d8cc" opacity="0.45"/><rect x="645" y="204" width="1" height="4" fill="#c8d8cc"/><rect x="645" y="208" width="1" height="2" fill="#c8d8cc" opacity="0.45"/><rect x="645" y="218" width="1" height="5" fill="#c8d8cc"/><rect x="645" y="216" width="1" height="2" fill="#c8d8cc" opacity="0.45"/><rect x="647" y="204" width="1" height="4" fill="#c8d8cc"/><rect x="647" y="208" width="1" height="2" fill="#c8d8cc" opacity="0.45"/><rect x="647" y="219" width="1" height="4" fill="#c8d8cc"/><rect x="647" y="217" width="1" height="2" fill="#c8d8cc" opacity="0.45"/><rect x="650" y="204" width="1" height="5" fill="#c8d8cc"/><rect x="650" y="209" width="1" height="2" fill="#c8d8cc" opacity="0.45"/><rect x="650" y="219" width="1" height="4" fill="#c8d8cc"/><rect x="650" y="217" width="1" height="2" fill="#c8d8cc" opacity="0.45"/><rect x="653" y="204" width="1" height="5" fill="#c8d8cc"/><rect x="653" y="209" width="1" height="2" fill="#c8d8cc" opacity="0.45"/><rect x="653" y="219" width="1" height="4" fill="#c8d8cc"/><rect x="653" y="217" width="1" height="2" fill="#c8d8cc" opacity="0.45"/><rect x="655" y="204" width="1" height="4" fill="#c8d8cc"/><rect x="655" y="208" width="1" height="2" fill="#c8d8cc" opacity="0.45"/><rect x="655" y="220" width="1" height="3" fill="#c8d8cc"/><rect x="655" y="218" width="1" height="2" fill="#c8d8cc" opacity="0.45"/><rect x="658" y="204" width="1" height="3" fill="#c8d8cc"/><rect x="658" y="207" width="1" height="2" fill="#c8d8cc" opacity="0.45"/><rect x="658" y="219" width="1" height="4" fill="#c8d8cc"/><rect x="658" y="217" width="1" height="2" fill="#c8d8cc" opacity="0.45"/><rect x="660" y="204" width="1" height="4" fill="#c8d8cc"/><rect x="660" y="208" width="1" height="2" fill="#c8d8cc" opacity="0.45"/><rect x="660" y="217" width="1" height="6" fill="#c8d8cc"/><rect x="660" y="215" width="1" height="2" fill="#c8d8cc" opacity="0.45"/><rect x="663" y="204" width="1" height="4" fill="#c8d8cc"/><rect x="663" y="208" width="1" height="2" fill="#c8d8cc" opacity="0.45"/><rect x="663" y="218" width="1" height="5" fill="#c8d8cc"/><rect x="663" y="216" width="1" height="2" fill="#c8d8cc" opacity="0.45"/><rect x="665" y="204" width="1" height="3" fill="#c8d8cc"/><rect x="665" y="207" width="1" height="2" fill="#c8d8cc" opacity="0.45"/><rect x="665" y="219" width="1" height="4" fill="#c8d8cc"/><rect x="665" y="217" width="1" height="2" fill="#c8d8cc" opacity="0.45"/><rect x="667" y="204" width="1" height="5" fill="#c8d8cc"/><rect x="667" y="209" width="1" height="2" fill="#c8d8cc" opacity="0.45"/><rect x="667" y="218" width="1" height="5" fill="#c8d8cc"/><rect x="667" y="216" width="1" height="2" fill="#c8d8cc" opacity="0.45"/><rect x="669" y="204" width="1" height="3" fill="#c8d8cc"/><rect x="669" y="207" width="1" height="2" fill="#c8d8cc" opacity="0.45"/><rect x="669" y="219" width="1" height="4" fill="#c8d8cc"/><rect x="669" y="217" width="1" height="2" fill="#c8d8cc" opacity="0.45"/><rect x="672" y="204" width="1" height="3" fill="#c8d8cc"/><rect x="672" y="207" width="1" height="2" fill="#c8d8cc" opacity="0.45"/><rect x="672" y="221" width="1" height="2" fill="#c8d8cc"/><rect x="672" y="219" width="1" height="2" fill="#c8d8cc" opacity="0.45"/><rect x="674" y="204" width="1" height="4" fill="#c8d8cc"/><rect x="674" y="208" width="1" height="2" fill="#c8d8cc" opacity="0.45"/><rect x="674" y="219" width="1" height="4" fill="#c8d8cc"/><rect x="674" y="217" width="1" height="2" fill="#c8d8cc" opacity="0.45"/><rect x="676" y="204" width="1" height="6" fill="#c8d8cc"/><rect x="676" y="210" width="1" height="2" fill="#c8d8cc" opacity="0.45"/><rect x="676" y="221" width="1" height="2" fill="#c8d8cc"/><rect x="676" y="219" width="1" height="2" fill="#c8d8cc" opacity="0.45"/><rect x="678" y="204" width="1" height="5" fill="#c8d8cc"/><rect x="678" y="209" width="1" height="2" fill="#c8d8cc" opacity="0.45"/><rect x="678" y="218" width="1" height="5" fill="#c8d8cc"/><rect x="678" y="216" width="1" height="2" fill="#c8d8cc" opacity="0.45"/><rect x="681" y="204" width="1" height="5" fill="#c8d8cc"/><rect x="681" y="209" width="1" height="2" fill="#c8d8cc" opacity="0.45"/><rect x="681" y="220" width="1" height="3" fill="#c8d8cc"/><rect x="681" y="218" width="1" height="2" fill="#c8d8cc" opacity="0.45"/><rect x="683" y="204" width="1" height="6" fill="#c8d8cc"/><rect x="683" y="210" width="1" height="2" fill="#c8d8cc" opacity="0.45"/><rect x="683" y="221" width="1" height="2" fill="#c8d8cc"/><rect x="683" y="219" width="1" height="2" fill="#c8d8cc" opacity="0.45"/><rect x="685" y="204" width="1" height="3" fill="#c8d8cc"/><rect x="685" y="207" width="1" height="2" fill="#c8d8cc" opacity="0.45"/><rect x="685" y="217" width="1" height="6" fill="#c8d8cc"/><rect x="685" y="215" width="1" height="2" fill="#c8d8cc" opacity="0.45"/><rect x="688" y="204" width="1" height="6" fill="#c8d8cc"/><rect x="688" y="210" width="1" height="2" fill="#c8d8cc" opacity="0.45"/><rect x="688" y="220" width="1" height="3" fill="#c8d8cc"/><rect x="688" y="218" width="1" height="2" fill="#c8d8cc" opacity="0.45"/><rect x="690" y="204" width="1" height="6" fill="#c8d8cc"/><rect x="690" y="210" width="1" height="2" fill="#c8d8cc" opacity="0.45"/><rect x="690" y="220" width="1" height="3" fill="#c8d8cc"/><rect x="690" y="218" width="1" height="2" fill="#c8d8cc" opacity="0.45"/><rect x="692" y="204" width="1" height="5" fill="#c8d8cc"/><rect x="692" y="209" width="1" height="2" fill="#c8d8cc" opacity="0.45"/><rect x="692" y="221" width="1" height="2" fill="#c8d8cc"/><rect x="692" y="219" width="1" height="2" fill="#c8d8cc" opacity="0.45"/><rect x="694" y="204" width="1" height="4" fill="#c8d8cc"/><rect x="694" y="208" width="1" height="2" fill="#c8d8cc" opacity="0.45"/><rect x="694" y="220" width="1" height="3" fill="#c8d8cc"/><rect x="694" y="218" width="1" height="2" fill="#c8d8cc" opacity="0.45"/><rect x="697" y="204" width="1" height="5" fill="#c8d8cc"/><rect x="697" y="209" width="1" height="2" fill="#c8d8cc" opacity="0.45"/><rect x="697" y="217" width="1" height="6" fill="#c8d8cc"/><rect x="697" y="215" width="1" height="2" fill="#c8d8cc" opacity="0.45"/><rect x="700" y="204" width="1" height="4" fill="#c8d8cc"/><rect x="700" y="208" width="1" height="2" fill="#c8d8cc" opacity="0.45"/><rect x="700" y="220" width="1" height="3" fill="#c8d8cc"/><rect x="700" y="218" width="1" height="2" fill="#c8d8cc" opacity="0.45"/><rect x="703" y="204" width="1" height="3" fill="#c8d8cc"/><rect x="703" y="207" width="1" height="2" fill="#c8d8cc" opacity="0.45"/><rect x="703" y="219" width="1" height="4" fill="#c8d8cc"/><rect x="703" y="217" width="1" height="2" fill="#c8d8cc" opacity="0.45"/><rect x="705" y="204" width="1" height="5" fill="#c8d8cc"/><rect x="705" y="209" width="1" height="2" fill="#c8d8cc" opacity="0.45"/><rect x="705" y="218" width="1" height="5" fill="#c8d8cc"/><rect x="705" y="216" width="1" height="2" fill="#c8d8cc" opacity="0.45"/><rect x="707" y="204" width="1" height="3" fill="#c8d8cc"/><rect x="707" y="207" width="1" height="2" fill="#c8d8cc" opacity="0.45"/><rect x="707" y="219" width="1" height="4" fill="#c8d8cc"/><rect x="707" y="217" width="1" height="2" fill="#c8d8cc" opacity="0.45"/><rect x="709" y="204" width="1" height="5" fill="#c8d8cc"/><rect x="709" y="209" width="1" height="2" fill="#c8d8cc" opacity="0.45"/><rect x="709" y="221" width="1" height="2" fill="#c8d8cc"/><rect x="709" y="219" width="1" height="2" fill="#c8d8cc" opacity="0.45"/><rect x="711" y="204" width="1" height="5" fill="#c8d8cc"/><rect x="711" y="209" width="1" height="2" fill="#c8d8cc" opacity="0.45"/><rect x="711" y="218" width="1" height="5" fill="#c8d8cc"/><rect x="711" y="216" width="1" height="2" fill="#c8d8cc" opacity="0.45"/><rect x="714" y="204" width="1" height="5" fill="#c8d8cc"/><rect x="714" y="209" width="1" height="2" fill="#c8d8cc" opacity="0.45"/><rect x="714" y="221" width="1" height="2" fill="#c8d8cc"/><rect x="714" y="219" width="1" height="2" fill="#c8d8cc" opacity="0.45"/><rect x="716" y="204" width="1" height="6" fill="#c8d8cc"/><rect x="716" y="210" width="1" height="2" fill="#c8d8cc" opacity="0.45"/><rect x="716" y="219" width="1" height="4" fill="#c8d8cc"/><rect x="716" y="217" width="1" height="2" fill="#c8d8cc" opacity="0.45"/><rect x="718" y="204" width="1" height="5" fill="#c8d8cc"/><rect x="718" y="209" width="1" height="2" fill="#c8d8cc" opacity="0.45"/><rect x="718" y="217" width="1" height="6" fill="#c8d8cc"/><rect x="718" y="215" width="1" height="2" fill="#c8d8cc" opacity="0.45"/><rect x="720" y="204" width="1" height="5" fill="#c8d8cc"/><rect x="720" y="209" width="1" height="2" fill="#c8d8cc" opacity="0.45"/><rect x="720" y="219" width="1" height="4" fill="#c8d8cc"/><rect x="720" y="217" width="1" height="2" fill="#c8d8cc" opacity="0.45"/><rect x="722" y="204" width="1" height="3" fill="#c8d8cc"/><rect x="722" y="207" width="1" height="2" fill="#c8d8cc" opacity="0.45"/><rect x="722" y="221" width="1" height="2" fill="#c8d8cc"/><rect x="722" y="219" width="1" height="2" fill="#c8d8cc" opacity="0.45"/><rect x="725" y="204" width="1" height="4" fill="#c8d8cc"/><rect x="725" y="208" width="1" height="2" fill="#c8d8cc" opacity="0.45"/><rect x="725" y="220" width="1" height="3" fill="#c8d8cc"/><rect x="725" y="218" width="1" height="2" fill="#c8d8cc" opacity="0.45"/><rect x="727" y="204" width="1" height="5" fill="#c8d8cc"/><rect x="727" y="209" width="1" height="2" fill="#c8d8cc" opacity="0.45"/><rect x="727" y="221" width="1" height="2" fill="#c8d8cc"/><rect x="727" y="219" width="1" height="2" fill="#c8d8cc" opacity="0.45"/><rect x="729" y="204" width="1" height="6" fill="#c8d8cc"/><rect x="729" y="210" width="1" height="2" fill="#c8d8cc" opacity="0.45"/><rect x="729" y="217" width="1" height="6" fill="#c8d8cc"/><rect x="729" y="215" width="1" height="2" fill="#c8d8cc" opacity="0.45"/><rect x="731" y="204" width="1" height="3" fill="#c8d8cc"/><rect x="731" y="207" width="1" height="2" fill="#c8d8cc" opacity="0.45"/><rect x="731" y="220" width="1" height="3" fill="#c8d8cc"/><rect x="731" y="218" width="1" height="2" fill="#c8d8cc" opacity="0.45"/><rect x="733" y="204" width="1" height="4" fill="#c8d8cc"/><rect x="733" y="208" width="1" height="2" fill="#c8d8cc" opacity="0.45"/><rect x="733" y="219" width="1" height="4" fill="#c8d8cc"/><rect x="733" y="217" width="1" height="2" fill="#c8d8cc" opacity="0.45"/><rect x="735" y="204" width="1" height="4" fill="#c8d8cc"/><rect x="735" y="208" width="1" height="2" fill="#c8d8cc" opacity="0.45"/><rect x="735" y="217" width="1" height="6" fill="#c8d8cc"/><rect x="735" y="215" width="1" height="2" fill="#c8d8cc" opacity="0.45"/><rect x="737" y="204" width="1" height="4" fill="#c8d8cc"/><rect x="737" y="208" width="1" height="2" fill="#c8d8cc" opacity="0.45"/><rect x="737" y="219" width="1" height="4" fill="#c8d8cc"/><rect x="737" y="217" width="1" height="2" fill="#c8d8cc" opacity="0.45"/><rect x="739" y="204" width="1" height="3" fill="#c8d8cc"/><rect x="739" y="207" width="1" height="2" fill="#c8d8cc" opacity="0.45"/><rect x="739" y="219" width="1" height="4" fill="#c8d8cc"/><rect x="739" y="217" width="1" height="2" fill="#c8d8cc" opacity="0.45"/><rect x="741" y="204" width="1" height="6" fill="#c8d8cc"/><rect x="741" y="210" width="1" height="2" fill="#c8d8cc" opacity="0.45"/><rect x="741" y="221" width="1" height="2" fill="#c8d8cc"/><rect x="741" y="219" width="1" height="2" fill="#c8d8cc" opacity="0.45"/><rect x="744" y="204" width="1" height="6" fill="#c8d8cc"/><rect x="744" y="210" width="1" height="2" fill="#c8d8cc" opacity="0.45"/><rect x="744" y="218" width="1" height="5" fill="#c8d8cc"/><rect x="744" y="216" width="1" height="2" fill="#c8d8cc" opacity="0.45"/><rect x="747" y="204" width="1" height="5" fill="#c8d8cc"/><rect x="747" y="209" width="1" height="2" fill="#c8d8cc" opacity="0.45"/><rect x="747" y="217" width="1" height="6" fill="#c8d8cc"/><rect x="747" y="215" width="1" height="2" fill="#c8d8cc" opacity="0.45"/><rect x="750" y="204" width="1" height="3" fill="#c8d8cc"/><rect x="750" y="207" width="1" height="2" fill="#c8d8cc" opacity="0.45"/><rect x="750" y="217" width="1" height="6" fill="#c8d8cc"/><rect x="750" y="215" width="1" height="2" fill="#c8d8cc" opacity="0.45"/><rect x="752" y="204" width="1" height="3" fill="#c8d8cc"/><rect x="752" y="207" width="1" height="2" fill="#c8d8cc" opacity="0.45"/><rect x="752" y="221" width="1" height="2" fill="#c8d8cc"/><rect x="752" y="219" width="1" height="2" fill="#c8d8cc" opacity="0.45"/><rect x="754" y="204" width="1" height="6" fill="#c8d8cc"/><rect x="754" y="210" width="1" height="2" fill="#c8d8cc" opacity="0.45"/><rect x="754" y="217" width="1" height="6" fill="#c8d8cc"/><rect x="754" y="215" width="1" height="2" fill="#c8d8cc" opacity="0.45"/><rect x="756" y="204" width="1" height="3" fill="#c8d8cc"/><rect x="756" y="207" width="1" height="2" fill="#c8d8cc" opacity="0.45"/><rect x="756" y="219" width="1" height="4" fill="#c8d8cc"/><rect x="756" y="217" width="1" height="2" fill="#c8d8cc" opacity="0.45"/><rect x="759" y="204" width="1" height="4" fill="#c8d8cc"/><rect x="759" y="208" width="1" height="2" fill="#c8d8cc" opacity="0.45"/><rect x="759" y="217" width="1" height="6" fill="#c8d8cc"/><rect x="759" y="215" width="1" height="2" fill="#c8d8cc" opacity="0.45"/><rect x="761" y="204" width="1" height="4" fill="#c8d8cc"/><rect x="761" y="208" width="1" height="2" fill="#c8d8cc" opacity="0.45"/><rect x="761" y="219" width="1" height="4" fill="#c8d8cc"/><rect x="761" y="217" width="1" height="2" fill="#c8d8cc" opacity="0.45"/><rect x="763" y="204" width="1" height="3" fill="#c8d8cc"/><rect x="763" y="207" width="1" height="2" fill="#c8d8cc" opacity="0.45"/><rect x="763" y="219" width="1" height="4" fill="#c8d8cc"/><rect x="763" y="217" width="1" height="2" fill="#c8d8cc" opacity="0.45"/><rect x="766" y="204" width="1" height="5" fill="#c8d8cc"/><rect x="766" y="209" width="1" height="2" fill="#c8d8cc" opacity="0.45"/><rect x="766" y="217" width="1" height="6" fill="#c8d8cc"/><rect x="766" y="215" width="1" height="2" fill="#c8d8cc" opacity="0.45"/><rect x="769" y="204" width="1" height="5" fill="#c8d8cc"/><rect x="769" y="209" width="1" height="2" fill="#c8d8cc" opacity="0.45"/><rect x="769" y="217" width="1" height="6" fill="#c8d8cc"/><rect x="769" y="215" width="1" height="2" fill="#c8d8cc" opacity="0.45"/><rect x="771" y="204" width="1" height="4" fill="#c8d8cc"/><rect x="771" y="208" width="1" height="2" fill="#c8d8cc" opacity="0.45"/><rect x="771" y="221" width="1" height="2" fill="#c8d8cc"/><rect x="771" y="219" width="1" height="2" fill="#c8d8cc" opacity="0.45"/><rect x="774" y="204" width="1" height="6" fill="#c8d8cc"/><rect x="774" y="210" width="1" height="2" fill="#c8d8cc" opacity="0.45"/><rect x="774" y="220" width="1" height="3" fill="#c8d8cc"/><rect x="774" y="218" width="1" height="2" fill="#c8d8cc" opacity="0.45"/><rect x="777" y="204" width="1" height="5" fill="#c8d8cc"/><rect x="777" y="209" width="1" height="2" fill="#c8d8cc" opacity="0.45"/><rect x="777" y="219" width="1" height="4" fill="#c8d8cc"/><rect x="777" y="217" width="1" height="2" fill="#c8d8cc" opacity="0.45"/><rect x="780" y="204" width="1" height="4" fill="#c8d8cc"/><rect x="780" y="208" width="1" height="2" fill="#c8d8cc" opacity="0.45"/><rect x="780" y="218" width="1" height="5" fill="#c8d8cc"/><rect x="780" y="216" width="1" height="2" fill="#c8d8cc" opacity="0.45"/><rect x="783" y="204" width="1" height="4" fill="#c8d8cc"/><rect x="783" y="208" width="1" height="2" fill="#c8d8cc" opacity="0.45"/><rect x="783" y="219" width="1" height="4" fill="#c8d8cc"/><rect x="783" y="217" width="1" height="2" fill="#c8d8cc" opacity="0.45"/><rect x="785" y="204" width="1" height="5" fill="#c8d8cc"/><rect x="785" y="209" width="1" height="2" fill="#c8d8cc" opacity="0.45"/><rect x="785" y="217" width="1" height="6" fill="#c8d8cc"/><rect x="785" y="215" width="1" height="2" fill="#c8d8cc" opacity="0.45"/><rect x="787" y="204" width="1" height="4" fill="#c8d8cc"/><rect x="787" y="208" width="1" height="2" fill="#c8d8cc" opacity="0.45"/><rect x="787" y="218" width="1" height="5" fill="#c8d8cc"/><rect x="787" y="216" width="1" height="2" fill="#c8d8cc" opacity="0.45"/><rect x="789" y="204" width="1" height="4" fill="#c8d8cc"/><rect x="789" y="208" width="1" height="2" fill="#c8d8cc" opacity="0.45"/><rect x="789" y="218" width="1" height="5" fill="#c8d8cc"/><rect x="789" y="216" width="1" height="2" fill="#c8d8cc" opacity="0.45"/><rect x="792" y="204" width="1" height="5" fill="#c8d8cc"/><rect x="792" y="209" width="1" height="2" fill="#c8d8cc" opacity="0.45"/><rect x="792" y="219" width="1" height="4" fill="#c8d8cc"/><rect x="792" y="217" width="1" height="2" fill="#c8d8cc" opacity="0.45"/><rect x="794" y="204" width="1" height="5" fill="#c8d8cc"/><rect x="794" y="209" width="1" height="2" fill="#c8d8cc" opacity="0.45"/><rect x="794" y="219" width="1" height="4" fill="#c8d8cc"/><rect x="794" y="217" width="1" height="2" fill="#c8d8cc" opacity="0.45"/><rect x="797" y="204" width="1" height="5" fill="#c8d8cc"/><rect x="797" y="209" width="1" height="2" fill="#c8d8cc" opacity="0.45"/><rect x="797" y="220" width="1" height="3" fill="#c8d8cc"/><rect x="797" y="218" width="1" height="2" fill="#c8d8cc" opacity="0.45"/><rect x="800" y="204" width="1" height="4" fill="#c8d8cc"/><rect x="800" y="208" width="1" height="2" fill="#c8d8cc" opacity="0.45"/><rect x="800" y="217" width="1" height="6" fill="#c8d8cc"/><rect x="800" y="215" width="1" height="2" fill="#c8d8cc" opacity="0.45"/><rect x="802" y="204" width="1" height="4" fill="#c8d8cc"/><rect x="802" y="208" width="1" height="2" fill="#c8d8cc" opacity="0.45"/><rect x="802" y="219" width="1" height="4" fill="#c8d8cc"/><rect x="802" y="217" width="1" height="2" fill="#c8d8cc" opacity="0.45"/><rect x="805" y="204" width="1" height="5" fill="#c8d8cc"/><rect x="805" y="209" width="1" height="2" fill="#c8d8cc" opacity="0.45"/><rect x="805" y="220" width="1" height="3" fill="#c8d8cc"/><rect x="805" y="218" width="1" height="2" fill="#c8d8cc" opacity="0.45"/><rect x="807" y="204" width="1" height="3" fill="#c8d8cc"/><rect x="807" y="207" width="1" height="2" fill="#c8d8cc" opacity="0.45"/><rect x="807" y="219" width="1" height="4" fill="#c8d8cc"/><rect x="807" y="217" width="1" height="2" fill="#c8d8cc" opacity="0.45"/><rect x="809" y="204" width="1" height="5" fill="#c8d8cc"/><rect x="809" y="209" width="1" height="2" fill="#c8d8cc" opacity="0.45"/><rect x="809" y="220" width="1" height="3" fill="#c8d8cc"/><rect x="809" y="218" width="1" height="2" fill="#c8d8cc" opacity="0.45"/><rect x="812" y="204" width="1" height="5" fill="#c8d8cc"/><rect x="812" y="209" width="1" height="2" fill="#c8d8cc" opacity="0.45"/><rect x="812" y="217" width="1" height="6" fill="#c8d8cc"/><rect x="812" y="215" width="1" height="2" fill="#c8d8cc" opacity="0.45"/><rect x="815" y="204" width="1" height="4" fill="#c8d8cc"/><rect x="815" y="208" width="1" height="2" fill="#c8d8cc" opacity="0.45"/><rect x="815" y="218" width="1" height="5" fill="#c8d8cc"/><rect x="815" y="216" width="1" height="2" fill="#c8d8cc" opacity="0.45"/><rect x="817" y="204" width="1" height="5" fill="#c8d8cc"/><rect x="817" y="209" width="1" height="2" fill="#c8d8cc" opacity="0.45"/><rect x="817" y="218" width="1" height="5" fill="#c8d8cc"/><rect x="817" y="216" width="1" height="2" fill="#c8d8cc" opacity="0.45"/><rect x="820" y="204" width="1" height="5" fill="#c8d8cc"/><rect x="820" y="209" width="1" height="2" fill="#c8d8cc" opacity="0.45"/><rect x="820" y="220" width="1" height="3" fill="#c8d8cc"/><rect x="820" y="218" width="1" height="2" fill="#c8d8cc" opacity="0.45"/><rect x="822" y="204" width="1" height="4" fill="#c8d8cc"/><rect x="822" y="208" width="1" height="2" fill="#c8d8cc" opacity="0.45"/><rect x="822" y="218" width="1" height="5" fill="#c8d8cc"/><rect x="822" y="216" width="1" height="2" fill="#c8d8cc" opacity="0.45"/><rect x="824" y="204" width="1" height="6" fill="#c8d8cc"/><rect x="824" y="210" width="1" height="2" fill="#c8d8cc" opacity="0.45"/><rect x="824" y="219" width="1" height="4" fill="#c8d8cc"/><rect x="824" y="217" width="1" height="2" fill="#c8d8cc" opacity="0.45"/><rect x="827" y="204" width="1" height="6" fill="#c8d8cc"/><rect x="827" y="210" width="1" height="2" fill="#c8d8cc" opacity="0.45"/><rect x="827" y="220" width="1" height="3" fill="#c8d8cc"/><rect x="827" y="218" width="1" height="2" fill="#c8d8cc" opacity="0.45"/><rect x="830" y="204" width="1" height="5" fill="#c8d8cc"/><rect x="830" y="209" width="1" height="2" fill="#c8d8cc" opacity="0.45"/><rect x="830" y="221" width="1" height="2" fill="#c8d8cc"/><rect x="830" y="219" width="1" height="2" fill="#c8d8cc" opacity="0.45"/><rect x="833" y="204" width="1" height="5" fill="#c8d8cc"/><rect x="833" y="209" width="1" height="2" fill="#c8d8cc" opacity="0.45"/><rect x="833" y="218" width="1" height="5" fill="#c8d8cc"/><rect x="833" y="216" width="1" height="2" fill="#c8d8cc" opacity="0.45"/><rect x="835" y="204" width="1" height="5" fill="#c8d8cc"/><rect x="835" y="209" width="1" height="2" fill="#c8d8cc" opacity="0.45"/><rect x="835" y="219" width="1" height="4" fill="#c8d8cc"/><rect x="835" y="217" width="1" height="2" fill="#c8d8cc" opacity="0.45"/><rect x="837" y="204" width="1" height="4" fill="#c8d8cc"/><rect x="837" y="208" width="1" height="2" fill="#c8d8cc" opacity="0.45"/><rect x="837" y="219" width="1" height="4" fill="#c8d8cc"/><rect x="837" y="217" width="1" height="2" fill="#c8d8cc" opacity="0.45"/><rect x="839" y="204" width="1" height="5" fill="#c8d8cc"/><rect x="839" y="209" width="1" height="2" fill="#c8d8cc" opacity="0.45"/><rect x="839" y="219" width="1" height="4" fill="#c8d8cc"/><rect x="839" y="217" width="1" height="2" fill="#c8d8cc" opacity="0.45"/><rect x="841" y="204" width="1" height="4" fill="#c8d8cc"/><rect x="841" y="208" width="1" height="2" fill="#c8d8cc" opacity="0.45"/><rect x="841" y="219" width="1" height="4" fill="#c8d8cc"/><rect x="841" y="217" width="1" height="2" fill="#c8d8cc" opacity="0.45"/><rect x="843" y="204" width="1" height="5" fill="#c8d8cc"/><rect x="843" y="209" width="1" height="2" fill="#c8d8cc" opacity="0.45"/><rect x="843" y="220" width="1" height="3" fill="#c8d8cc"/><rect x="843" y="218" width="1" height="2" fill="#c8d8cc" opacity="0.45"/><rect x="845" y="204" width="1" height="4" fill="#c8d8cc"/><rect x="845" y="208" width="1" height="2" fill="#c8d8cc" opacity="0.45"/><rect x="845" y="220" width="1" height="3" fill="#c8d8cc"/><rect x="845" y="218" width="1" height="2" fill="#c8d8cc" opacity="0.45"/><rect x="847" y="204" width="1" height="4" fill="#c8d8cc"/><rect x="847" y="208" width="1" height="2" fill="#c8d8cc" opacity="0.45"/><rect x="847" y="217" width="1" height="6" fill="#c8d8cc"/><rect x="847" y="215" width="1" height="2" fill="#c8d8cc" opacity="0.45"/><rect x="850" y="204" width="1" height="4" fill="#c8d8cc"/><rect x="850" y="208" width="1" height="2" fill="#c8d8cc" opacity="0.45"/><rect x="850" y="218" width="1" height="5" fill="#c8d8cc"/><rect x="850" y="216" width="1" height="2" fill="#c8d8cc" opacity="0.45"/><rect x="852" y="204" width="1" height="4" fill="#c8d8cc"/><rect x="852" y="208" width="1" height="2" fill="#c8d8cc" opacity="0.45"/><rect x="852" y="219" width="1" height="4" fill="#c8d8cc"/><rect x="852" y="217" width="1" height="2" fill="#c8d8cc" opacity="0.45"/><rect x="854" y="204" width="1" height="4" fill="#c8d8cc"/><rect x="854" y="208" width="1" height="2" fill="#c8d8cc" opacity="0.45"/><rect x="854" y="220" width="1" height="3" fill="#c8d8cc"/><rect x="854" y="218" width="1" height="2" fill="#c8d8cc" opacity="0.45"/><rect x="856" y="204" width="1" height="5" fill="#c8d8cc"/><rect x="856" y="209" width="1" height="2" fill="#c8d8cc" opacity="0.45"/><rect x="856" y="219" width="1" height="4" fill="#c8d8cc"/><rect x="856" y="217" width="1" height="2" fill="#c8d8cc" opacity="0.45"/><rect x="858" y="204" width="1" height="4" fill="#c8d8cc"/><rect x="858" y="208" width="1" height="2" fill="#c8d8cc" opacity="0.45"/><rect x="858" y="217" width="1" height="6" fill="#c8d8cc"/><rect x="858" y="215" width="1" height="2" fill="#c8d8cc" opacity="0.45"/><rect x="861" y="204" width="1" height="3" fill="#c8d8cc"/><rect x="861" y="207" width="1" height="2" fill="#c8d8cc" opacity="0.45"/><rect x="861" y="220" width="1" height="3" fill="#c8d8cc"/><rect x="861" y="218" width="1" height="2" fill="#c8d8cc" opacity="0.45"/><rect x="864" y="204" width="1" height="5" fill="#c8d8cc"/><rect x="864" y="209" width="1" height="2" fill="#c8d8cc" opacity="0.45"/><rect x="864" y="221" width="1" height="2" fill="#c8d8cc"/><rect x="864" y="219" width="1" height="2" fill="#c8d8cc" opacity="0.45"/><rect x="867" y="204" width="1" height="4" fill="#c8d8cc"/><rect x="867" y="208" width="1" height="2" fill="#c8d8cc" opacity="0.45"/><rect x="867" y="218" width="1" height="5" fill="#c8d8cc"/><rect x="867" y="216" width="1" height="2" fill="#c8d8cc" opacity="0.45"/><rect x="869" y="204" width="1" height="3" fill="#c8d8cc"/><rect x="869" y="207" width="1" height="2" fill="#c8d8cc" opacity="0.45"/><rect x="869" y="221" width="1" height="2" fill="#c8d8cc"/><rect x="869" y="219" width="1" height="2" fill="#c8d8cc" opacity="0.45"/><rect x="871" y="204" width="1" height="4" fill="#c8d8cc"/><rect x="871" y="208" width="1" height="2" fill="#c8d8cc" opacity="0.45"/><rect x="871" y="218" width="1" height="5" fill="#c8d8cc"/><rect x="871" y="216" width="1" height="2" fill="#c8d8cc" opacity="0.45"/><rect x="874" y="204" width="1" height="5" fill="#c8d8cc"/><rect x="874" y="209" width="1" height="2" fill="#c8d8cc" opacity="0.45"/><rect x="874" y="218" width="1" height="5" fill="#c8d8cc"/><rect x="874" y="216" width="1" height="2" fill="#c8d8cc" opacity="0.45"/><rect x="876" y="204" width="1" height="4" fill="#c8d8cc"/><rect x="876" y="208" width="1" height="2" fill="#c8d8cc" opacity="0.45"/><rect x="876" y="219" width="1" height="4" fill="#c8d8cc"/><rect x="876" y="217" width="1" height="2" fill="#c8d8cc" opacity="0.45"/><rect x="879" y="204" width="1" height="3" fill="#c8d8cc"/><rect x="879" y="207" width="1" height="2" fill="#c8d8cc" opacity="0.45"/><rect x="879" y="219" width="1" height="4" fill="#c8d8cc"/><rect x="879" y="217" width="1" height="2" fill="#c8d8cc" opacity="0.45"/><rect x="881" y="204" width="1" height="5" fill="#c8d8cc"/><rect x="881" y="209" width="1" height="2" fill="#c8d8cc" opacity="0.45"/><rect x="881" y="220" width="1" height="3" fill="#c8d8cc"/><rect x="881" y="218" width="1" height="2" fill="#c8d8cc" opacity="0.45"/><rect x="884" y="204" width="1" height="3" fill="#c8d8cc"/><rect x="884" y="207" width="1" height="2" fill="#c8d8cc" opacity="0.45"/><rect x="884" y="219" width="1" height="4" fill="#c8d8cc"/><rect x="884" y="217" width="1" height="2" fill="#c8d8cc" opacity="0.45"/><rect x="886" y="204" width="1" height="4" fill="#c8d8cc"/><rect x="886" y="208" width="1" height="2" fill="#c8d8cc" opacity="0.45"/><rect x="886" y="219" width="1" height="4" fill="#c8d8cc"/><rect x="886" y="217" width="1" height="2" fill="#c8d8cc" opacity="0.45"/><rect x="888" y="204" width="1" height="3" fill="#c8d8cc"/><rect x="888" y="207" width="1" height="2" fill="#c8d8cc" opacity="0.45"/><rect x="888" y="221" width="1" height="2" fill="#c8d8cc"/><rect x="888" y="219" width="1" height="2" fill="#c8d8cc" opacity="0.45"/><rect x="890" y="204" width="1" height="5" fill="#c8d8cc"/><rect x="890" y="209" width="1" height="2" fill="#c8d8cc" opacity="0.45"/><rect x="890" y="219" width="1" height="4" fill="#c8d8cc"/><rect x="890" y="217" width="1" height="2" fill="#c8d8cc" opacity="0.45"/><rect x="893" y="204" width="1" height="5" fill="#c8d8cc"/><rect x="893" y="209" width="1" height="2" fill="#c8d8cc" opacity="0.45"/><rect x="893" y="221" width="1" height="2" fill="#c8d8cc"/><rect x="893" y="219" width="1" height="2" fill="#c8d8cc" opacity="0.45"/><rect x="895" y="204" width="1" height="6" fill="#c8d8cc"/><rect x="895" y="210" width="1" height="2" fill="#c8d8cc" opacity="0.45"/><rect x="895" y="219" width="1" height="4" fill="#c8d8cc"/><rect x="895" y="217" width="1" height="2" fill="#c8d8cc" opacity="0.45"/><rect x="897" y="204" width="1" height="6" fill="#c8d8cc"/><rect x="897" y="210" width="1" height="2" fill="#c8d8cc" opacity="0.45"/><rect x="897" y="221" width="1" height="2" fill="#c8d8cc"/><rect x="897" y="219" width="1" height="2" fill="#c8d8cc" opacity="0.45"/><rect x="900" y="204" width="1" height="4" fill="#c8d8cc"/><rect x="900" y="208" width="1" height="2" fill="#c8d8cc" opacity="0.45"/><rect x="900" y="218" width="1" height="5" fill="#c8d8cc"/><rect x="900" y="216" width="1" height="2" fill="#c8d8cc" opacity="0.45"/><rect x="902" y="204" width="1" height="6" fill="#c8d8cc"/><rect x="902" y="210" width="1" height="2" fill="#c8d8cc" opacity="0.45"/><rect x="902" y="221" width="1" height="2" fill="#c8d8cc"/><rect x="902" y="219" width="1" height="2" fill="#c8d8cc" opacity="0.45"/><rect x="904" y="204" width="1" height="5" fill="#c8d8cc"/><rect x="904" y="209" width="1" height="2" fill="#c8d8cc" opacity="0.45"/><rect x="904" y="220" width="1" height="3" fill="#c8d8cc"/><rect x="904" y="218" width="1" height="2" fill="#c8d8cc" opacity="0.45"/><rect x="907" y="204" width="1" height="4" fill="#c8d8cc"/><rect x="907" y="208" width="1" height="2" fill="#c8d8cc" opacity="0.45"/><rect x="907" y="219" width="1" height="4" fill="#c8d8cc"/><rect x="907" y="217" width="1" height="2" fill="#c8d8cc" opacity="0.45"/><rect x="909" y="204" width="1" height="6" fill="#c8d8cc"/><rect x="909" y="210" width="1" height="2" fill="#c8d8cc" opacity="0.45"/><rect x="909" y="220" width="1" height="3" fill="#c8d8cc"/><rect x="909" y="218" width="1" height="2" fill="#c8d8cc" opacity="0.45"/><rect x="911" y="204" width="1" height="3" fill="#c8d8cc"/><rect x="911" y="207" width="1" height="2" fill="#c8d8cc" opacity="0.45"/><rect x="911" y="219" width="1" height="4" fill="#c8d8cc"/><rect x="911" y="217" width="1" height="2" fill="#c8d8cc" opacity="0.45"/><rect x="914" y="204" width="1" height="3" fill="#c8d8cc"/><rect x="914" y="207" width="1" height="2" fill="#c8d8cc" opacity="0.45"/><rect x="914" y="218" width="1" height="5" fill="#c8d8cc"/><rect x="914" y="216" width="1" height="2" fill="#c8d8cc" opacity="0.45"/><rect x="916" y="204" width="1" height="3" fill="#c8d8cc"/><rect x="916" y="207" width="1" height="2" fill="#c8d8cc" opacity="0.45"/><rect x="916" y="219" width="1" height="4" fill="#c8d8cc"/><rect x="916" y="217" width="1" height="2" fill="#c8d8cc" opacity="0.45"/><rect x="918" y="204" width="1" height="6" fill="#c8d8cc"/><rect x="918" y="210" width="1" height="2" fill="#c8d8cc" opacity="0.45"/><rect x="918" y="217" width="1" height="6" fill="#c8d8cc"/><rect x="918" y="215" width="1" height="2" fill="#c8d8cc" opacity="0.45"/><rect x="921" y="204" width="1" height="3" fill="#c8d8cc"/><rect x="921" y="207" width="1" height="2" fill="#c8d8cc" opacity="0.45"/><rect x="921" y="221" width="1" height="2" fill="#c8d8cc"/><rect x="921" y="219" width="1" height="2" fill="#c8d8cc" opacity="0.45"/><rect x="923" y="204" width="1" height="4" fill="#c8d8cc"/><rect x="923" y="208" width="1" height="2" fill="#c8d8cc" opacity="0.45"/><rect x="923" y="221" width="1" height="2" fill="#c8d8cc"/><rect x="923" y="219" width="1" height="2" fill="#c8d8cc" opacity="0.45"/><rect x="925" y="204" width="1" height="6" fill="#c8d8cc"/><rect x="925" y="210" width="1" height="2" fill="#c8d8cc" opacity="0.45"/><rect x="925" y="217" width="1" height="6" fill="#c8d8cc"/><rect x="925" y="215" width="1" height="2" fill="#c8d8cc" opacity="0.45"/><rect x="928" y="204" width="1" height="5" fill="#c8d8cc"/><rect x="928" y="209" width="1" height="2" fill="#c8d8cc" opacity="0.45"/><rect x="928" y="218" width="1" height="5" fill="#c8d8cc"/><rect x="928" y="216" width="1" height="2" fill="#c8d8cc" opacity="0.45"/><rect x="931" y="204" width="1" height="6" fill="#c8d8cc"/><rect x="931" y="210" width="1" height="2" fill="#c8d8cc" opacity="0.45"/><rect x="931" y="221" width="1" height="2" fill="#c8d8cc"/><rect x="931" y="219" width="1" height="2" fill="#c8d8cc" opacity="0.45"/><rect x="934" y="204" width="1" height="4" fill="#c8d8cc"/><rect x="934" y="208" width="1" height="2" fill="#c8d8cc" opacity="0.45"/><rect x="934" y="219" width="1" height="4" fill="#c8d8cc"/><rect x="934" y="217" width="1" height="2" fill="#c8d8cc" opacity="0.45"/><rect x="937" y="204" width="1" height="5" fill="#c8d8cc"/><rect x="937" y="209" width="1" height="2" fill="#c8d8cc" opacity="0.45"/><rect x="937" y="221" width="1" height="2" fill="#c8d8cc"/><rect x="937" y="219" width="1" height="2" fill="#c8d8cc" opacity="0.45"/><rect x="940" y="204" width="1" height="5" fill="#c8d8cc"/><rect x="940" y="209" width="1" height="2" fill="#c8d8cc" opacity="0.45"/><rect x="940" y="219" width="1" height="4" fill="#c8d8cc"/><rect x="940" y="217" width="1" height="2" fill="#c8d8cc" opacity="0.45"/><rect x="942" y="204" width="1" height="5" fill="#c8d8cc"/><rect x="942" y="209" width="1" height="2" fill="#c8d8cc" opacity="0.45"/><rect x="942" y="220" width="1" height="3" fill="#c8d8cc"/><rect x="942" y="218" width="1" height="2" fill="#c8d8cc" opacity="0.45"/><rect x="944" y="204" width="1" height="6" fill="#c8d8cc"/><rect x="944" y="210" width="1" height="2" fill="#c8d8cc" opacity="0.45"/><rect x="944" y="221" width="1" height="2" fill="#c8d8cc"/><rect x="944" y="219" width="1" height="2" fill="#c8d8cc" opacity="0.45"/><rect x="946" y="213" width="51" height="1" fill="#1c1c1c" /><rect x="1005" y="115" width="88" height="1" fill="#1c1c1c" /><rect x="1005" y="114" width="88" height="3" fill="#1c1c1c" /><rect x="1008" y="117" width="1" height="2" fill="#1c1c1c" /><rect x="1009" y="113" width="3" height="5" fill="#1c1c1c" /><rect x="1012" y="113" width="2" height="5" fill="#1c1c1c" /><rect x="1014" y="117" width="1" height="1" fill="#1c1c1c" /><rect x="1016" y="113" width="1" height="5" fill="#1c1c1c" /><rect x="1019" y="112" width="2" height="7" fill="#1c1c1c" /><rect x="1020" y="113" width="2" height="5" fill="#1c1c1c" /><rect x="1021" y="112" width="1" height="7" fill="#1c1c1c" /><rect x="1023" y="112" width="1" height="7" fill="#1c1c1c" /><rect x="1025" y="112" width="1" height="7" fill="#1c1c1c" /><rect x="1026" y="112" width="2" height="7" fill="#1c1c1c" /><rect x="1029" y="113" width="1" height="5" fill="#1c1c1c" /><rect x="1031" y="113" width="1" height="5" fill="#1c1c1c" /><rect x="1033" y="117" width="1" height="1" fill="#1c1c1c" /><rect x="1034" y="113" width="2" height="5" fill="#1c1c1c" /><rect x="1035" y="117" width="2" height="2" fill="#1c1c1c" /><rect x="1038" y="112" width="3" height="7" fill="#1c1c1c" /><rect x="1039" y="112" width="3" height="7" fill="#1c1c1c" /><rect x="1041" y="112" width="2" height="7" fill="#1c1c1c" /><rect x="1044" y="113" width="1" height="5" fill="#1c1c1c" /><rect x="1045" y="113" width="1" height="1" fill="#1c1c1c" /><rect x="1046" y="117" width="2" height="1" fill="#1c1c1c" /><rect x="1047" y="113" width="3" height="5" fill="#1c1c1c" /><rect x="1050" y="117" width="3" height="2" fill="#1c1c1c" /><rect x="1051" y="113" width="3" height="5" fill="#1c1c1c" /><rect x="1054" y="117" width="3" height="1" fill="#1c1c1c" /><rect x="1056" y="112" width="2" height="7" fill="#1c1c1c" /><rect x="1058" y="117" width="2" height="2" fill="#1c1c1c" /><rect x="1061" y="113" width="1" height="5" fill="#1c1c1c" /><rect x="1063" y="113" width="2" height="5" fill="#1c1c1c" /><rect x="1064" y="113" width="2" height="5" fill="#1c1c1c" /><rect x="1065" y="113" width="1" height="5" fill="#1c1c1c" /><rect x="1067" y="117" width="2" height="1" fill="#1c1c1c" /><rect x="1068" y="113" width="1" height="5" fill="#1c1c1c" /><rect x="1070" y="113" width="1" height="5" fill="#1c1c1c" /><rect x="1073" y="113" width="1" height="5" fill="#1c1c1c" /><rect x="1074" y="112" width="1" height="2" fill="#1c1c1c" /><rect x="1076" y="112" width="1" height="2" fill="#1c1c1c" /><rect x="1079" y="112" width="2" height="2" fill="#1c1c1c" /><rect x="1082" y="113" width="2" height="1" fill="#1c1c1c" /><rect x="1085" y="113" width="2" height="5" fill="#1c1c1c" /><rect x="1088" y="112" width="2" height="7" fill="#1c1c1c" /><rect x="1090" y="112" width="2" height="2" fill="#1c1c1c" /><rect x="1091" y="113" width="1" height="5" fill="#1c1c1c" /><rect x="1092" y="117" width="1" height="1" fill="#1c1c1c" /><rect x="1005" y="135" width="88" height="1" fill="#1c1c1c" /><rect x="1005" y="134" width="88" height="3" fill="#1c1c1c" /><rect x="1011" y="133" width="1" height="5" fill="#1c1c1c" /><rect x="1017" y="133" width="1" height="5" fill="#1c1c1c" /><rect x="1023" y="137" width="2" height="1" fill="#1c1c1c" /><rect x="1027" y="133" width="1" height="5" fill="#1c1c1c" /><rect x="1032" y="133" width="1" height="5" fill="#1c1c1c" /><rect x="1037" y="133" width="2" height="1" fill="#1c1c1c" /><rect x="1042" y="137" width="2" height="1" fill="#1c1c1c" /><rect x="1043" y="133" width="1" height="5" fill="#1c1c1c" /><rect x="1045" y="133" width="2" height="5" fill="#1c1c1c" /><rect x="1046" y="132" width="3" height="7" fill="#1c1c1c" /><rect x="1048" y="133" width="3" height="5" fill="#1c1c1c" /><rect x="1049" y="133" width="2" height="5" fill="#1c1c1c" /><rect x="1051" y="132" width="1" height="2" fill="#1c1c1c" /><rect x="1054" y="132" width="3" height="2" fill="#1c1c1c" /><rect x="1057" y="137" width="1" height="1" fill="#1c1c1c" /><rect x="1059" y="133" width="1" height="5" fill="#1c1c1c" /><rect x="1060" y="133" width="2" height="5" fill="#1c1c1c" /><rect x="1061" y="133" width="3" height="5" fill="#1c1c1c" /><rect x="1064" y="137" width="1" height="1" fill="#1c1c1c" /><rect x="1067" y="137" width="2" height="2" fill="#1c1c1c" /><rect x="1068" y="137" width="2" height="1" fill="#1c1c1c" /><rect x="1070" y="133" width="1" height="5" fill="#1c1c1c" /><rect x="1072" y="137" width="3" height="1" fill="#1c1c1c" /><rect x="1073" y="133" width="1" height="1" fill="#1c1c1c" /><rect x="1075" y="133" width="3" height="5" fill="#1c1c1c" /><rect x="1077" y="132" width="2" height="7" fill="#1c1c1c" /><rect x="1079" y="133" width="3" height="5" fill="#1c1c1c" /><rect x="1082" y="132" width="2" height="7" fill="#1c1c1c" /><rect x="1083" y="133" width="2" height="5" fill="#1c1c1c" /><rect x="1085" y="137" width="1" height="2" fill="#1c1c1c" /><rect x="1086" y="133" width="1" height="5" fill="#1c1c1c" /><rect x="1088" y="133" width="1" height="5" fill="#1c1c1c" /><rect x="1090" y="133" width="1" height="5" fill="#1c1c1c" /><rect x="1005" y="154" width="88" height="1" fill="#1c1c1c" /><rect x="1005" y="174" width="88" height="1" fill="#1c1c1c" /><rect x="1005" y="193" width="88" height="1" fill="#1c1c1c" /><rect x="1067" y="192" width="26" height="3" fill="#1c1c1c" /><rect x="1070" y="195" width="2" height="1" fill="#1c1c1c" /><rect x="1072" y="191" width="1" height="5" fill="#1c1c1c" /><rect x="1074" y="195" width="3" height="2" fill="#1c1c1c" /><rect x="1077" y="195" width="2" height="1" fill="#1c1c1c" /><rect x="1080" y="191" width="1" height="1" fill="#1c1c1c" /><rect x="1081" y="191" width="3" height="5" fill="#1c1c1c" /><rect x="1083" y="190" width="3" height="7" fill="#1c1c1c" /><rect x="1085" y="195" width="3" height="2" fill="#1c1c1c" /><rect x="1087" y="191" width="2" height="1" fill="#1c1c1c" /><rect x="1089" y="191" width="3" height="5" fill="#1c1c1c" /><rect x="1091" y="191" width="1" height="1" fill="#1c1c1c" /><rect x="1005" y="204" width="88" height="19" fill="#1c1c1c"/><rect x="1006" y="204" width="1" height="5" fill="#c8d8cc"/><rect x="1006" y="209" width="1" height="2" fill="#c8d8cc" opacity="0.45"/><rect x="1006" y="219" width="1" height="4" fill="#c8d8cc"/><rect x="1006" y="217" width="1" height="2" fill="#c8d8cc" opacity="0.45"/><rect x="1009" y="204" width="1" height="4" fill="#c8d8cc"/><rect x="1009" y="208" width="1" height="2" fill="#c8d8cc" opacity="0.45"/><rect x="1009" y="218" width="1" height="5" fill="#c8d8cc"/><rect x="1009" y="216" width="1" height="2" fill="#c8d8cc" opacity="0.45"/><rect x="1012" y="204" width="1" height="4" fill="#c8d8cc"/><rect x="1012" y="208" width="1" height="2" fill="#c8d8cc" opacity="0.45"/><rect x="1012" y="219" width="1" height="4" fill="#c8d8cc"/><rect x="1012" y="217" width="1" height="2" fill="#c8d8cc" opacity="0.45"/><rect x="1014" y="204" width="1" height="5" fill="#c8d8cc"/><rect x="1014" y="209" width="1" height="2" fill="#c8d8cc" opacity="0.45"/><rect x="1014" y="218" width="1" height="5" fill="#c8d8cc"/><rect x="1014" y="216" width="1" height="2" fill="#c8d8cc" opacity="0.45"/><rect x="1016" y="204" width="1" height="3" fill="#c8d8cc"/><rect x="1016" y="207" width="1" height="2" fill="#c8d8cc" opacity="0.45"/><rect x="1016" y="219" width="1" height="4" fill="#c8d8cc"/><rect x="1016" y="217" width="1" height="2" fill="#c8d8cc" opacity="0.45"/><rect x="1019" y="204" width="1" height="5" fill="#c8d8cc"/><rect x="1019" y="209" width="1" height="2" fill="#c8d8cc" opacity="0.45"/><rect x="1019" y="220" width="1" height="3" fill="#c8d8cc"/><rect x="1019" y="218" width="1" height="2" fill="#c8d8cc" opacity="0.45"/><rect x="1022" y="204" width="1" height="4" fill="#c8d8cc"/><rect x="1022" y="208" width="1" height="2" fill="#c8d8cc" opacity="0.45"/><rect x="1022" y="219" width="1" height="4" fill="#c8d8cc"/><rect x="1022" y="217" width="1" height="2" fill="#c8d8cc" opacity="0.45"/><rect x="1024" y="204" width="1" height="3" fill="#c8d8cc"/><rect x="1024" y="207" width="1" height="2" fill="#c8d8cc" opacity="0.45"/><rect x="1024" y="221" width="1" height="2" fill="#c8d8cc"/><rect x="1024" y="219" width="1" height="2" fill="#c8d8cc" opacity="0.45"/><rect x="1027" y="204" width="1" height="5" fill="#c8d8cc"/><rect x="1027" y="209" width="1" height="2" fill="#c8d8cc" opacity="0.45"/><rect x="1027" y="219" width="1" height="4" fill="#c8d8cc"/><rect x="1027" y="217" width="1" height="2" fill="#c8d8cc" opacity="0.45"/><rect x="1030" y="204" width="1" height="5" fill="#c8d8cc"/><rect x="1030" y="209" width="1" height="2" fill="#c8d8cc" opacity="0.45"/><rect x="1030" y="219" width="1" height="4" fill="#c8d8cc"/><rect x="1030" y="217" width="1" height="2" fill="#c8d8cc" opacity="0.45"/><rect x="1032" y="204" width="1" height="5" fill="#c8d8cc"/><rect x="1032" y="209" width="1" height="2" fill="#c8d8cc" opacity="0.45"/><rect x="1032" y="219" width="1" height="4" fill="#c8d8cc"/><rect x="1032" y="217" width="1" height="2" fill="#c8d8cc" opacity="0.45"/><rect x="1034" y="204" width="1" height="5" fill="#c8d8cc"/><rect x="1034" y="209" width="1" height="2" fill="#c8d8cc" opacity="0.45"/><rect x="1034" y="218" width="1" height="5" fill="#c8d8cc"/><rect x="1034" y="216" width="1" height="2" fill="#c8d8cc" opacity="0.45"/><rect x="1037" y="204" width="1" height="5" fill="#c8d8cc"/><rect x="1037" y="209" width="1" height="2" fill="#c8d8cc" opacity="0.45"/><rect x="1037" y="219" width="1" height="4" fill="#c8d8cc"/><rect x="1037" y="217" width="1" height="2" fill="#c8d8cc" opacity="0.45"/><rect x="1040" y="204" width="1" height="3" fill="#c8d8cc"/><rect x="1040" y="207" width="1" height="2" fill="#c8d8cc" opacity="0.45"/><rect x="1040" y="218" width="1" height="5" fill="#c8d8cc"/><rect x="1040" y="216" width="1" height="2" fill="#c8d8cc" opacity="0.45"/><rect x="1043" y="204" width="1" height="5" fill="#c8d8cc"/><rect x="1043" y="209" width="1" height="2" fill="#c8d8cc" opacity="0.45"/><rect x="1043" y="221" width="1" height="2" fill="#c8d8cc"/><rect x="1043" y="219" width="1" height="2" fill="#c8d8cc" opacity="0.45"/><rect x="1045" y="204" width="1" height="5" fill="#c8d8cc"/><rect x="1045" y="209" width="1" height="2" fill="#c8d8cc" opacity="0.45"/><rect x="1045" y="220" width="1" height="3" fill="#c8d8cc"/><rect x="1045" y="218" width="1" height="2" fill="#c8d8cc" opacity="0.45"/><rect x="1047" y="204" width="1" height="5" fill="#c8d8cc"/><rect x="1047" y="209" width="1" height="2" fill="#c8d8cc" opacity="0.45"/><rect x="1047" y="219" width="1" height="4" fill="#c8d8cc"/><rect x="1047" y="217" width="1" height="2" fill="#c8d8cc" opacity="0.45"/><rect x="1049" y="204" width="1" height="5" fill="#c8d8cc"/><rect x="1049" y="209" width="1" height="2" fill="#c8d8cc" opacity="0.45"/><rect x="1049" y="218" width="1" height="5" fill="#c8d8cc"/><rect x="1049" y="216" width="1" height="2" fill="#c8d8cc" opacity="0.45"/><rect x="1051" y="204" width="1" height="5" fill="#c8d8cc"/><rect x="1051" y="209" width="1" height="2" fill="#c8d8cc" opacity="0.45"/><rect x="1051" y="220" width="1" height="3" fill="#c8d8cc"/><rect x="1051" y="218" width="1" height="2" fill="#c8d8cc" opacity="0.45"/><rect x="1053" y="204" width="1" height="5" fill="#c8d8cc"/><rect x="1053" y="209" width="1" height="2" fill="#c8d8cc" opacity="0.45"/><rect x="1053" y="219" width="1" height="4" fill="#c8d8cc"/><rect x="1053" y="217" width="1" height="2" fill="#c8d8cc" opacity="0.45"/><rect x="1056" y="204" width="1" height="5" fill="#c8d8cc"/><rect x="1056" y="209" width="1" height="2" fill="#c8d8cc" opacity="0.45"/><rect x="1056" y="218" width="1" height="5" fill="#c8d8cc"/><rect x="1056" y="216" width="1" height="2" fill="#c8d8cc" opacity="0.45"/><rect x="1058" y="204" width="1" height="4" fill="#c8d8cc"/><rect x="1058" y="208" width="1" height="2" fill="#c8d8cc" opacity="0.45"/><rect x="1058" y="218" width="1" height="5" fill="#c8d8cc"/><rect x="1058" y="216" width="1" height="2" fill="#c8d8cc" opacity="0.45"/><rect x="1060" y="204" width="1" height="5" fill="#c8d8cc"/><rect x="1060" y="209" width="1" height="2" fill="#c8d8cc" opacity="0.45"/><rect x="1060" y="221" width="1" height="2" fill="#c8d8cc"/><rect x="1060" y="219" width="1" height="2" fill="#c8d8cc" opacity="0.45"/><rect x="1062" y="204" width="1" height="4" fill="#c8d8cc"/><rect x="1062" y="208" width="1" height="2" fill="#c8d8cc" opacity="0.45"/><rect x="1062" y="219" width="1" height="4" fill="#c8d8cc"/><rect x="1062" y="217" width="1" height="2" fill="#c8d8cc" opacity="0.45"/><rect x="1065" y="204" width="1" height="3" fill="#c8d8cc"/><rect x="1065" y="207" width="1" height="2" fill="#c8d8cc" opacity="0.45"/><rect x="1065" y="219" width="1" height="4" fill="#c8d8cc"/><rect x="1065" y="217" width="1" height="2" fill="#c8d8cc" opacity="0.45"/><rect x="1067" y="204" width="1" height="4" fill="#c8d8cc"/><rect x="1067" y="208" width="1" height="2" fill="#c8d8cc" opacity="0.45"/><rect x="1067" y="221" width="1" height="2" fill="#c8d8cc"/><rect x="1067" y="219" width="1" height="2" fill="#c8d8cc" opacity="0.45"/><rect x="1070" y="204" width="1" height="5" fill="#c8d8cc"/><rect x="1070" y="209" width="1" height="2" fill="#c8d8cc" opacity="0.45"/><rect x="1070" y="219" width="1" height="4" fill="#c8d8cc"/><rect x="1070" y="217" width="1" height="2" fill="#c8d8cc" opacity="0.45"/><rect x="1072" y="204" width="1" height="5" fill="#c8d8cc"/><rect x="1072" y="209" width="1" height="2" fill="#c8d8cc" opacity="0.45"/><rect x="1072" y="218" width="1" height="5" fill="#c8d8cc"/><rect x="1072" y="216" width="1" height="2" fill="#c8d8cc" opacity="0.45"/><rect x="1074" y="204" width="1" height="5" fill="#c8d8cc"/><rect x="1074" y="209" width="1" height="2" fill="#c8d8cc" opacity="0.45"/><rect x="1074" y="219" width="1" height="4" fill="#c8d8cc"/><rect x="1074" y="217" width="1" height="2" fill="#c8d8cc" opacity="0.45"/><rect x="1076" y="204" width="1" height="4" fill="#c8d8cc"/><rect x="1076" y="208" width="1" height="2" fill="#c8d8cc" opacity="0.45"/><rect x="1076" y="218" width="1" height="5" fill="#c8d8cc"/><rect x="1076" y="216" width="1" height="2" fill="#c8d8cc" opacity="0.45"/><rect x="1078" y="204" width="1" height="5" fill="#c8d8cc"/><rect x="1078" y="209" width="1" height="2" fill="#c8d8cc" opacity="0.45"/><rect x="1078" y="220" width="1" height="3" fill="#c8d8cc"/><rect x="1078" y="218" width="1" height="2" fill="#c8d8cc" opacity="0.45"/><rect x="1080" y="204" width="1" height="5" fill="#c8d8cc"/><rect x="1080" y="209" width="1" height="2" fill="#c8d8cc" opacity="0.45"/><rect x="1080" y="218" width="1" height="5" fill="#c8d8cc"/><rect x="1080" y="216" width="1" height="2" fill="#c8d8cc" opacity="0.45"/><rect x="1082" y="204" width="1" height="3" fill="#c8d8cc"/><rect x="1082" y="207" width="1" height="2" fill="#c8d8cc" opacity="0.45"/><rect x="1082" y="219" width="1" height="4" fill="#c8d8cc"/><rect x="1082" y="217" width="1" height="2" fill="#c8d8cc" opacity="0.45"/><rect x="1084" y="204" width="1" height="5" fill="#c8d8cc"/><rect x="1084" y="209" width="1" height="2" fill="#c8d8cc" opacity="0.45"/><rect x="1084" y="218" width="1" height="5" fill="#c8d8cc"/><rect x="1084" y="216" width="1" height="2" fill="#c8d8cc" opacity="0.45"/><rect x="1086" y="204" width="1" height="5" fill="#c8d8cc"/><rect x="1086" y="209" width="1" height="2" fill="#c8d8cc" opacity="0.45"/><rect x="1086" y="219" width="1" height="4" fill="#c8d8cc"/><rect x="1086" y="217" width="1" height="2" fill="#c8d8cc" opacity="0.45"/><rect x="1088" y="204" width="1" height="3" fill="#c8d8cc"/><rect x="1088" y="207" width="1" height="2" fill="#c8d8cc" opacity="0.45"/><rect x="1088" y="219" width="1" height="4" fill="#c8d8cc"/><rect x="1088" y="217" width="1" height="2" fill="#c8d8cc" opacity="0.45"/><rect x="1090" y="204" width="1" height="3" fill="#c8d8cc"/><rect x="1090" y="207" width="1" height="2" fill="#c8d8cc" opacity="0.45"/><rect x="1090" y="219" width="1" height="4" fill="#c8d8cc"/><rect x="1090" y="217" width="1" height="2" fill="#c8d8cc" opacity="0.45"/><rect x="107" y="54" width="1" height="36" fill="#b4b4b4" /><rect x="121" y="82" width="1" height="8" fill="#b4b4b4" /><rect x="135" y="82" width="1" height="8" fill="#b4b4b4" /><rect x="149" y="82" width="1" height="8" fill="#b4b4b4" /><rect x="176" y="82" width="1" height="8" fill="#b4b4b4" /><rect x="190" y="82" width="1" height="8" fill="#b4b4b4" /><rect x="203" y="82" width="1" height="8" fill="#b4b4b4" /><rect x="216" y="82" width="1" height="8" fill="#b4b4b4" /><rect x="228" y="82" width="1" height="8" fill="#b4b4b4" /><rect x="241" y="82" width="1" height="8" fill="#b4b4b4" /><rect x="254" y="82" width="1" height="8" fill="#b4b4b4" /><rect x="267" y="82" width="1" height="8" fill="#b4b4b4" /><rect x="279" y="82" width="1" height="8" fill="#b4b4b4" /><rect x="292" y="82" width="1" height="8" fill="#b4b4b4" /><rect x="305" y="82" width="1" height="8" fill="#b4b4b4" /><rect x="317" y="54" width="1" height="36" fill="#b4b4b4" /><rect x="330" y="82" width="1" height="8" fill="#b4b4b4" /><rect x="343" y="82" width="1" height="8" fill="#b4b4b4" /><rect x="356" y="82" width="1" height="8" fill="#b4b4b4" /><rect x="368" y="82" width="1" height="8" fill="#b4b4b4" /><rect x="381" y="82" width="1" height="8" fill="#b4b4b4" /><rect x="394" y="82" width="1" height="8" fill="#b4b4b4" /><rect x="406" y="82" width="1" height="8" fill="#b4b4b4" /><rect x="419" y="82" width="1" height="8" fill="#b4b4b4" /><rect x="432" y="82" width="1" height="8" fill="#b4b4b4" /><rect x="445" y="82" width="1" height="8" fill="#b4b4b4" /><rect x="457" y="82" width="1" height="8" fill="#b4b4b4" /><rect x="470" y="82" width="1" height="8" fill="#b4b4b4" /><rect x="483" y="82" width="1" height="8" fill="#b4b4b4" /><rect x="495" y="82" width="1" height="8" fill="#b4b4b4" /><rect x="508" y="82" width="1" height="8" fill="#b4b4b4" /><rect x="521" y="54" width="1" height="36" fill="#b4b4b4" /><rect x="534" y="82" width="1" height="8" fill="#b4b4b4" /><rect x="546" y="82" width="1" height="8" fill="#b4b4b4" /><rect x="559" y="82" width="1" height="8" fill="#b4b4b4" /><rect x="572" y="82" width="1" height="8" fill="#b4b4b4" /><rect x="584" y="82" width="1" height="8" fill="#b4b4b4" /><rect x="597" y="82" width="1" height="8" fill="#b4b4b4" /><rect x="610" y="82" width="1" height="8" fill="#b4b4b4" /><rect x="622" y="82" width="1" height="8" fill="#b4b4b4" /><rect x="635" y="82" width="1" height="8" fill="#b4b4b4" /><rect x="648" y="82" width="1" height="8" fill="#b4b4b4" /><rect x="661" y="82" width="1" height="8" fill="#b4b4b4" /><rect x="673" y="82" width="1" height="8" fill="#b4b4b4" /><rect x="686" y="82" width="1" height="8" fill="#b4b4b4" /><rect x="699" y="82" width="1" height="8" fill="#b4b4b4" /><rect x="711" y="82" width="1" height="8" fill="#b4b4b4" /><rect x="724" y="54" width="1" height="36" fill="#b4b4b4" /><rect x="737" y="82" width="1" height="8" fill="#b4b4b4" /><rect x="750" y="82" width="1" height="8" fill="#b4b4b4" /><rect x="762" y="82" width="1" height="8" fill="#b4b4b4" /><rect x="775" y="82" width="1" height="8" fill="#b4b4b4" /><rect x="788" y="82" width="1" height="8" fill="#b4b4b4" /><rect x="800" y="82" width="1" height="8" fill="#b4b4b4" /><rect x="813" y="82" width="1" height="8" fill="#b4b4b4" /><rect x="826" y="82" width="1" height="8" fill="#b4b4b4" /><rect x="839" y="82" width="1" height="8" fill="#b4b4b4" /><rect x="851" y="82" width="1" height="8" fill="#b4b4b4" /><rect x="864" y="82" width="1" height="8" fill="#b4b4b4" /><rect x="877" y="82" width="1" height="8" fill="#b4b4b4" /><rect x="889" y="82" width="1" height="8" fill="#b4b4b4" /><rect x="902" y="82" width="1" height="8" fill="#b4b4b4" /><rect x="915" y="82" width="1" height="8" fill="#b4b4b4" /><rect x="927" y="54" width="1" height="36" fill="#b4b4b4" /><rect x="940" y="82" width="1" height="8" fill="#b4b4b4" /><rect x="953" y="82" width="1" height="8" fill="#b4b4b4" /><rect x="966" y="82" width="1" height="8" fill="#b4b4b4" /><rect x="978" y="82" width="1" height="8" fill="#b4b4b4" /><rect x="991" y="82" width="1" height="8" fill="#b4b4b4" /><rect x="1019" y="82" width="1" height="8" fill="#b4b4b4" /><rect x="1035" y="82" width="1" height="8" fill="#b4b4b4" /><rect x="1051" y="82" width="1" height="8" fill="#b4b4b4" /><rect x="1066" y="82" width="1" height="8" fill="#b4b4b4" /><rect x="1082" y="82" width="1" height="8" fill="#b4b4b4" /><rect x="162" y="19" width="1" height="451" fill="#6a1ab8" /><rect x="186" y="19" width="1" height="451" fill="#6a1ab8" /><rect x="197" y="19" width="1" height="451" fill="#6aa080" /><rect x="997" y="19" width="1" height="451" fill="#6aa080" /><rect x="1004" y="19" width="1" height="451" fill="#6aa080" /><rect x="669" y="90" width="8" height="380" fill="#ffffff" opacity="0.10"/><polygon points="667,80 680,80 677,83 677,90 669,90 669,83" fill="#c8d0c8"/><path d="M670.5 83.5 L675.5 89 M675.5 83.5 L670.5 89" stroke="#909890" stroke-width="1" shape-rendering="auto"/><rect x="197" y="38" width="1" height="14" fill="#a0a0a0" /><rect x="1004" y="38" width="1" height="14" fill="#a0a0a0" /><rect x="1035" y="60" width="1" height="410" fill="#20d040" /><polygon points="1028.5,53.5 1042.5,53.5 1035.5,60.5" fill="#1e8a3a" stroke="#30d050" stroke-width="1" shape-rendering="auto"/><polygon points="165.5,6.5 183.5,6.5 186.5,9.5 186.5,15.5 183.5,18.5 165.5,18.5 162.5,15.5 162.5,9.5" fill="#6414b4" stroke="#c8b8d8" stroke-width="1" shape-rendering="auto"/><polygon points="200.5,6.5 994.5,6.5 997.5,9.5 997.5,15.5 994.5,18.5 200.5,18.5 197.5,15.5 197.5,9.5" fill="#6a9f80" stroke="#b4bab4" stroke-width="1" shape-rendering="auto"/><polygon points="1006.5,6.5 1096.5,6.5 1099.5,9.5 1099.5,15.5 1096.5,18.5 1006.5,18.5 1003.5,15.5 1003.5,9.5" fill="#6a9f80" stroke="#b4bab4" stroke-width="1" shape-rendering="auto"/><rect x="145" y="473.5" width="185" height="10" rx="5" fill="#7b7f7b" shape-rendering="auto"/><circle cx="150.5" cy="478.5" r="2.4" fill="#1e1e1e" shape-rendering="auto"/><circle cx="324.5" cy="478.5" r="2.4" fill="#1e1e1e" shape-rendering="auto"/><rect x="236" y="474" width="2" height="8" fill="#1e1e1e" /><circle cx="112.5" cy="478.5" r="5.5" fill="#1e1e1e" shape-rendering="auto"/><polygon points="110,478.5 114.5,475.5 114.5,481.5" fill="#e0e0e0" shape-rendering="auto"/></svg>
<div class="t" style="left:111px;top:57px;font-size:12px;color:#aab2ba;">33.1.00</div>
<div class="t" style="left:111px;top:70px;font-size:11px;color:#aab2ba;">1:04.00</div>
<div class="t" style="left:321px;top:57px;font-size:12px;color:#aab2ba;">65.1.00</div>
<div class="t" style="left:321px;top:70px;font-size:11px;color:#aab2ba;">2:05.076</div>
<div class="t" style="left:525px;top:57px;font-size:12px;color:#aab2ba;">97.1.00</div>
<div class="t" style="left:525px;top:70px;font-size:11px;color:#aab2ba;">3:04.153</div>
<div class="t" style="left:728px;top:57px;font-size:12px;color:#aab2ba;">129.1.00</div>
<div class="t" style="left:728px;top:70px;font-size:11px;color:#aab2ba;">4:03.23</div>
<div class="t" style="left:931px;top:57px;font-size:12px;color:#aab2ba;">161.1.00</div>
<div class="t" style="left:931px;top:70px;font-size:11px;color:#aab2ba;">5:02.307</div>
<div class="a" style="left:111px;top:68px;width:37px;height:1px;background:#aab2ba"></div>
<div class="a" style="left:321px;top:68px;width:43px;height:1px;background:#aab2ba"></div>
<div class="a" style="left:525px;top:68px;width:43px;height:1px;background:#aab2ba"></div>
<div class="a" style="left:728px;top:68px;width:37px;height:1px;background:#aab2ba"></div>
<div class="a" style="left:931px;top:68px;width:43px;height:1px;background:#aab2ba"></div>
<div class="t" style="left:200px;top:39.5px;font-size:10.5px;color:#ffffff;letter-spacing:0.3px">130</div>
<div class="t" style="left:1007px;top:39.5px;font-size:10.5px;color:#ffffff;letter-spacing:0.3px">105</div>
<div class="t" style="left:165px;top:8px;font-size:11px;color:#ffffff;letter-spacing:-0.4px;width:21px;overflow:hidden">Комм</div>
<div class="t" style="left:200px;top:8.5px;font-size:10px;color:#fff8e8;">2</div>
<div class="t" style="left:213px;top:8.5px;font-size:10px;color:#fff8e8;">Be My Lover.mp4</div>
<div class="t" style="left:1007px;top:8.5px;font-size:10px;color:#fff8e8;">3</div>
<div class="t" style="left:1020px;top:8.5px;font-size:10px;color:#fff8e8;transform:scaleX(0.9);transform-origin:0 0">DEVIL MY LOVE.mp4</div>
<div class="t" style="left:199px;top:93px;font-size:10px;color:#ffffff;letter-spacing:0px">Be My Lover.mp4</div>
<div class="t" style="left:1006px;top:93px;font-size:10px;color:#ffffff;transform:scaleX(0.9);transform-origin:0 0">DEVIL MY LOVE.mp4</div>
<div class="t" style="left:199px;top:230px;font-size:10px;color:#ffffff;letter-spacing:0.3px">MIDI untitled MIDI item</div>
<div class="t" style="left:1006px;top:230px;font-size:10px;color:#ffffff;letter-spacing:0.3px">MIDI untitled MIDI</div>
<svg class="a" style="left:0;top:0" width="1093" height="400" shape-rendering="crispEdges"><rect x="465" y="339" width="9" height="10" fill="#0e9c7e"/><rect x="464" y="339" width="1" height="10" fill="#17392f"/><path d="M199.5 351 V358 M199 351.5 H203 M203.5 352 V354 M199 354.5 H203 M206 351.5 H210 M205.5 352 V357 M206 357.5 H210" stroke="#17392f" stroke-width="1" fill="none"/><path d="M360.5 351 V358 M360 351.5 H364 M364.5 352 V354 M360 354.5 H364 M367 351.5 H371 M366.5 352 V357 M367 357.5 H371" stroke="#17392f" stroke-width="1" fill="none"/><path d="M465.5 351 V358 M465 351.5 H469 M469.5 352 V354 M465 354.5 H469 M472 351.5 H476 M471.5 352 V357 M472 357.5 H476" stroke="#17392f" stroke-width="1" fill="none"/><path d="M576.5 351 V358 M576 351.5 H580 M580.5 352 V354 M576 354.5 H580 M583 351.5 H587 M582.5 352 V357 M583 357.5 H587" stroke="#17392f" stroke-width="1" fill="none"/></svg>
<div class="a" style="left:72px;top:110px;width:19px;height:4px;background:#1e1e1e"></div>
<div class="a" style="left:71px;top:93px;width:21px;height:20px;background:#1e1e1e;border-radius:2px"></div>
<div class="a" style="left:72px;top:94px;width:19px;height:18px;background:linear-gradient(#595959 0,#595959 8px,#404040 8px,#404040 100%)"></div>
<div class="t" style="left:71px;top:98px;width:21px;text-align:center;font-size:10.5px;color:#d8308c">M</div>
<div class="a" style="left:72px;top:132px;width:19px;height:4px;background:#1e1e1e"></div>
<div class="a" style="left:71px;top:115px;width:21px;height:20px;background:#1e1e1e;border-radius:2px"></div>
<div class="a" style="left:72px;top:116px;width:19px;height:18px;background:linear-gradient(#595959 0,#595959 8px,#404040 8px,#404040 100%)"></div>
<div class="t" style="left:71px;top:120px;width:21px;text-align:center;font-size:10.5px;color:#f0a050">S</div>
<div class="a" style="left:72px;top:247px;width:19px;height:4px;background:#1e1e1e"></div>
<div class="a" style="left:71px;top:230px;width:21px;height:20px;background:#1e1e1e;border-radius:2px"></div>
<div class="a" style="left:72px;top:231px;width:19px;height:18px;background:linear-gradient(#595959 0,#595959 8px,#404040 8px,#404040 100%)"></div>
<div class="t" style="left:71px;top:235px;width:21px;text-align:center;font-size:10.5px;color:#d8308c">M</div>
<div class="a" style="left:72px;top:269px;width:19px;height:4px;background:#1e1e1e"></div>
<div class="a" style="left:71px;top:252px;width:21px;height:20px;background:#1e1e1e;border-radius:2px"></div>
<div class="a" style="left:72px;top:253px;width:19px;height:18px;background:linear-gradient(#595959 0,#595959 8px,#404040 8px,#404040 100%)"></div>
<div class="t" style="left:71px;top:257px;width:21px;text-align:center;font-size:10.5px;color:#f0a050">S</div>
<svg class="a" style="left:73px;top:204px" width="18" height="18">
<polygon points="5.5,1.5 12.5,1.5 16.5,5.5 16.5,12.5 12.5,16.5 5.5,16.5 1.5,12.5 1.5,5.5" fill="#5a5a5a" stroke="#1a1a1a" stroke-width="1"/>
<circle cx="9" cy="9" r="3.6" fill="none" stroke="#c8c8c8" stroke-width="1.3"/>
<path d="M5.5 12.5 L12.5 5.5" stroke="#c8c8c8" stroke-width="1.3"/>
</svg>
<svg class="a" style="left:73px;top:341px" width="18" height="18">
<polygon points="5.5,1.5 12.5,1.5 16.5,5.5 16.5,12.5 12.5,16.5 5.5,16.5 1.5,12.5 1.5,5.5" fill="#5a5a5a" stroke="#1a1a1a" stroke-width="1"/>
<circle cx="9" cy="9" r="3.6" fill="none" stroke="#c8c8c8" stroke-width="1.3"/>
<path d="M5.5 12.5 L12.5 5.5" stroke="#c8c8c8" stroke-width="1.3"/>
</svg>
<div class="a" style="left:0;top:32px;width:11px;height:28px;background:#1e5e2a"></div>
<div class="a" style="left:13px;top:32px;width:28px;height:28px;background:#1e5e2a"></div>
<svg class="a" style="left:0;top:30px" width="70" height="32">
<rect x="4" y="8" width="1.5" height="4" fill="#00ff44"/><rect x="4" y="14" width="1.5" height="4" fill="#00ff44"/><rect x="4" y="20" width="1.5" height="4" fill="#00ff44"/>
<rect x="19" y="8" width="2" height="3" fill="#00ff44"/><rect x="19" y="20.5" width="2" height="3" fill="#00ff44"/>
<path d="M23 9.5 H28 A6.5 6.5 0 0 1 28 22 H23" stroke="#00ff44" stroke-width="3" fill="none"/>
<path d="M52.5 17 V13 A4.5 4.5 0 0 1 61.5 13 V17" stroke="#c8d8cc" stroke-width="2" fill="none"/>
<rect x="50" y="16" width="14" height="8" fill="#c8d8cc"/>
</svg>
<div class="a" style="left:668px;top:320px;width:425px;height:538px;background:#fff"></div>
<div class="a" style="left:668px;top:319px;width:425px;height:1px;background:#1e3e36"></div>
<div class="t" style="left:676px;top:329px;font-size:12px;color:#000;">Actions</div>
<div class="t" style="left:679px;top:366px;font-size:12px;color:#000;transform:scaleX(0.9);transform-origin:0 0">Filter:</div>
<div class="a" style="left:707px;top:360px;width:400px;height:23px;border:1px solid #0078d7"></div>
<div class="a" style="left:711px;top:365px;width:1px;height:13px;background:#000"></div>
<div class="a" style="left:679px;top:387px;width:420px;height:378px;border:1px solid #828790;border-right:none"></div>
<div class="a" style="left:786px;top:390px;width:1px;height:23px;background:#e5e5e5"></div>
<svg class="a" style="left:967px;top:387px" width="14" height="8"><path d="M3.2 5.8 L6.5 2.5 L9.8 5.8" stroke="#404040" stroke-width="1.1" fill="none"/></svg>
<div class="t" style="left:687px;top:395px;font-size:12px;color:#000;transform:scaleX(0.88);transform-origin:0 0">Shortcut</div>
<div class="t" style="left:793px;top:395px;font-size:12px;color:#000;transform:scaleX(0.88);transform-origin:0 0">Description</div>
<div class="a" style="left:680px;top:388px;width:413px;height:375px;overflow:hidden">
<div class="t" style="left:7px;top:28px;font-size:12px;color:#141414;transform:scaleX(0.88);transform-origin:0 0">Ctrl+Alt+Win+Up</div>
<div class="t" style="left:113px;top:28px;font-size:12px;color:#141414;transform:scaleX(0.88);transform-origin:0 0">Custom: +3 db Envelope points</div>
<div class="t" style="left:7px;top:45px;font-size:12px;color:#141414;transform:scaleX(0.88);transform-origin:0 0">Ctrl+Alt+Win+Down</div>
<div class="t" style="left:113px;top:45px;font-size:12px;color:#141414;transform:scaleX(0.88);transform-origin:0 0">Custom: -3db Envelope points</div>
<div class="t" style="left:113px;top:62px;font-size:12px;color:#141414;transform:scaleX(0.88);transform-origin:0 0">Custom: Explode and remove muted Item</div>
<div class="t" style="left:113px;top:79px;font-size:12px;color:#141414;transform:scaleX(0.88);transform-origin:0 0">Custom: Insert &amp; Gain</div>
<div class="t" style="left:7px;top:96px;font-size:12px;color:#141414;transform:scaleX(0.88);transform-origin:0 0">Shift+G</div>
<div class="t" style="left:113px;top:96px;font-size:12px;color:#141414;transform:scaleX(0.88);transform-origin:0 0">Custom: Play Loop</div>
<div class="t" style="left:113px;top:113px;font-size:12px;color:#141414;transform:scaleX(0.88);transform-origin:0 0">Custom: Remove Selected Area Of Items And Unselect All Items</div>
<div class="t" style="left:113px;top:130px;font-size:12px;color:#141414;transform:scaleX(0.88);transform-origin:0 0">Custom: Split with no time selection</div>
<div class="t" style="left:113px;top:147px;font-size:12px;color:#141414;transform:scaleX(0.88);transform-origin:0 0">Script: !_Concert List with Preset New v01.lua</div>
<div class="t" style="left:7px;top:164px;font-size:12px;color:#141414;transform:scaleX(0.88);transform-origin:0 0">Alt+/</div>
<div class="t" style="left:113px;top:164px;font-size:12px;color:#141414;transform:scaleX(0.88);transform-origin:0 0">Script: !_Concert List with Preset v24.lua</div>
<div class="t" style="left:113px;top:181px;font-size:12px;color:#141414;transform:scaleX(0.88);transform-origin:0 0">Script: Airon_Colour Swatch.lua</div>
<div class="t" style="left:113px;top:198px;font-size:12px;color:#141414;transform:scaleX(0.88);transform-origin:0 0">Script: Argitoth_Convert all takes pitch to rate.eel</div>
<div class="t" style="left:113px;top:215px;font-size:12px;color:#141414;transform:scaleX(0.88);transform-origin:0 0">Script: Argitoth_Convert all takes rate to pitch.eel</div>
<div class="t" style="left:113px;top:232px;font-size:12px;color:#141414;transform:scaleX(0.88);transform-origin:0 0">Script: Argitoth_Select items with color of selected items.eel</div>
<div class="t" style="left:113px;top:249px;font-size:12px;color:#141414;transform:scaleX(0.88);transform-origin:0 0">Script: Argitoth_Set number of channels for selected tracks.eel</div>
<div class="t" style="left:113px;top:266px;font-size:12px;color:#141414;transform:scaleX(0.88);transform-origin:0 0">Script: Argitoth_Split selected items at stretch markers.eel</div>
<div class="t" style="left:113px;top:283px;font-size:12px;color:#141414;transform:scaleX(0.88);transform-origin:0 0">Script: Breeder_spk77_GlueTools.lua</div>
<div class="t" style="left:113px;top:300px;font-size:12px;color:#141414;transform:scaleX(0.88);transform-origin:0 0">Script: CS_Copy Track Volume Envelope to Selected Takes and Items</div>
<div class="t" style="left:113px;top:317px;font-size:12px;color:#141414;transform:scaleX(0.88);transform-origin:0 0">Script: CS_Create Marker 0 - Blue.lua</div>
<div class="t" style="left:113px;top:334px;font-size:12px;color:#141414;transform:scaleX(0.88);transform-origin:0 0">Script: CS_Create Marker 0 - Green.lua</div>
<div class="t" style="left:113px;top:351px;font-size:12px;color:#141414;transform:scaleX(0.88);transform-origin:0 0">Script: CS_Create Marker 0.lua</div>
<div class="t" style="left:113px;top:368px;font-size:12px;color:#141414;transform:scaleX(0.88);transform-origin:0 0">Script: CS_Create random colored region at time selection.lua</div>
</div>
<div class="a" style="left:679px;top:775px;width:225px;height:82px;border:1px solid #b4b4b4"></div>
<div class="a" style="left:685px;top:770px;width:141px;height:12px;background:#fff"></div>
<div class="t" style="left:688px;top:771px;font-size:12px;color:#000;transform:scaleX(0.885);transform-origin:0 0">Shortcuts for selected action</div>
<div class="a" style="left:685px;top:788px;width:157px;height:63px;border:1px solid #828790"></div>
<div class="a" style="left:847px;top:789px;width:52px;height:21px;background:#cccccc;border:1px solid #bfbfbf"></div>
<div class="a" style="left:847px;top:817px;width:52px;height:21px;background:#cccccc;border:1px solid #bfbfbf"></div>
<div class="t" style="left:859px;top:794px;font-size:12px;color:#838383;transform:scaleX(0.88);transform-origin:0 0">Add...</div>
<div class="t" style="left:857px;top:822px;font-size:12px;color:#838383;transform:scaleX(0.88);transform-origin:0 0">Delete</div>
</body></html>
